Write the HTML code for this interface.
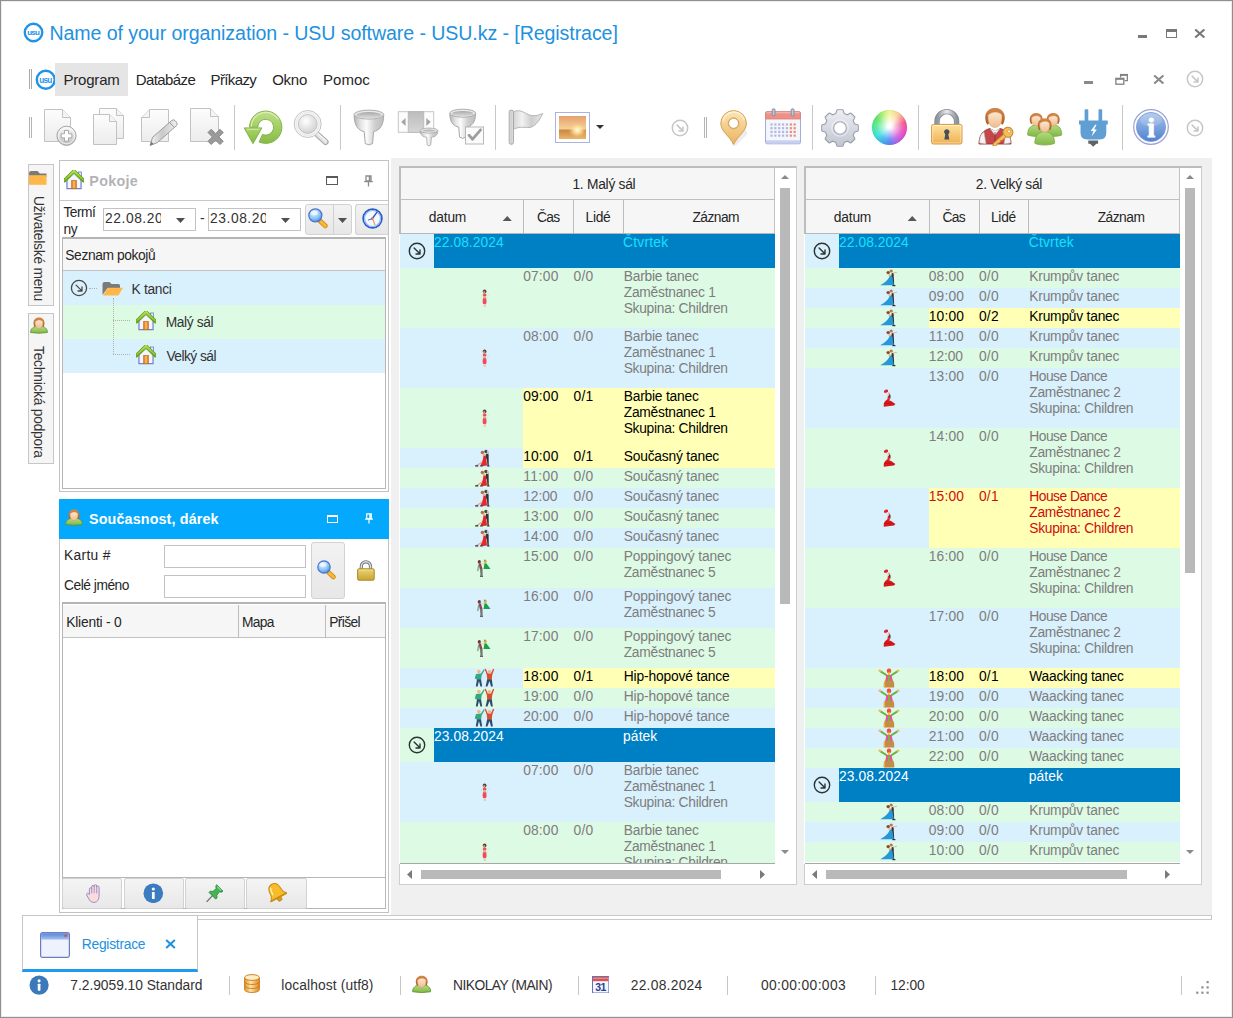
<!DOCTYPE html><html lang="cs"><head><meta charset="utf-8"><title>Registrace</title><style>
*{box-sizing:border-box;margin:0;padding:0}
html,body{width:1233px;height:1018px;overflow:hidden;background:#fff}
body{font-family:"Liberation Sans",sans-serif;font-size:13.8px;color:#2b2b2b;position:relative;line-height:16px}
.a{position:absolute}
.t{position:absolute;white-space:nowrap}
#win{position:absolute;left:0;top:0;width:1233px;height:1018px;border:1px solid #8f8f8f;box-shadow:inset 0 0 0 1px #ededed}
.ws{position:absolute;left:390.500px;top:157.500px;width:821.500px;height:758.300px;background:#f0f0f0}
.panel{position:absolute;background:#fff;border:1px solid #c2c2c2}
.hd{background:#f6f6f6}
.rb{background:#d9f0fd}
.rg{background:#ddfae5}
.ry{background:#ffffb5}
.grp{background:#0080c4}
.row{position:absolute;left:0;width:100%}
.c{position:absolute;top:0.9px;white-space:pre;color:#7d7d7d;line-height:16.3px}
.row.hl .c{color:#000}
.row.red .c{color:#d00c0c}
.vsep{position:absolute;width:1px;background:#bcbcbc}
.btn{position:absolute;border:1px solid #d2d2d2;border-radius:3px;background:linear-gradient(#f2f2f2,#e7e7e7)}
</style></head><body>
<div id="win"></div>
<svg width="0" height="0" style="position:absolute"><defs>
<linearGradient id="gpg" x1="0" y1="0" x2="0" y2="1"><stop offset="0" stop-color="#fdfdfd"/><stop offset="1" stop-color="#ececec"/></linearGradient>
<linearGradient id="ggr" x1="0" y1="0" x2="1" y2="0"><stop offset="0" stop-color="#f4f4f4"/><stop offset=".45" stop-color="#c9c9c9"/><stop offset="1" stop-color="#f0f0f0"/></linearGradient>
<linearGradient id="ggr2" x1="0" y1="0" x2="0" y2="1"><stop offset="0" stop-color="#fafafa"/><stop offset="1" stop-color="#bdbdbd"/></linearGradient>
<linearGradient id="ggreen" x1="0" y1="0" x2="0" y2="1"><stop offset="0" stop-color="#bfe088"/><stop offset="1" stop-color="#86bc44"/></linearGradient>
<linearGradient id="ggreen2" x1="0" y1="0" x2="0" y2="1"><stop offset="0" stop-color="#a9d468"/><stop offset="1" stop-color="#84ba42"/></linearGradient>
<linearGradient id="gfun" x1="0" y1="0" x2="1" y2="0"><stop offset="0" stop-color="#b4b4b4"/><stop offset=".22" stop-color="#e4e4e4"/><stop offset=".42" stop-color="#fbfbfb"/><stop offset=".7" stop-color="#cfcfcf"/><stop offset="1" stop-color="#bdbdbd"/></linearGradient>
<linearGradient id="gfunin" x1="0" y1="0" x2="0" y2="1"><stop offset="0" stop-color="#a8a8a8"/><stop offset="1" stop-color="#dedede"/></linearGradient>
<linearGradient id="gcol" x1="0" y1="0" x2="0" y2="1"><stop offset="0" stop-color="#bcbcbc"/><stop offset="1" stop-color="#d6d6d6"/></linearGradient>
<linearGradient id="gflag" x1="0" y1="0" x2="1" y2="0"><stop offset="0" stop-color="#d4d4d4"/><stop offset=".3" stop-color="#f2f2f2"/><stop offset=".62" stop-color="#cdcdcd"/><stop offset="1" stop-color="#e9e9e9"/></linearGradient>
<linearGradient id="gpin" x1="0" y1="0" x2="0" y2="1"><stop offset="0" stop-color="#fce6b8"/><stop offset="1" stop-color="#ebb25e"/></linearGradient>
<linearGradient id="glock" x1="0" y1="0" x2="0" y2="1"><stop offset="0" stop-color="#fde3a0"/><stop offset="1" stop-color="#efb052"/></linearGradient>
<linearGradient id="glock2" x1="0" y1="0" x2="0" y2="1"><stop offset="0" stop-color="#ecd470"/><stop offset="1" stop-color="#c8a434"/></linearGradient>
<linearGradient id="gshk" x1="0" y1="0" x2="1" y2="0"><stop offset="0" stop-color="#8e949c"/><stop offset=".5" stop-color="#e6e9ee"/><stop offset="1" stop-color="#8e949c"/></linearGradient>
<linearGradient id="ggear" x1="0" y1="0" x2="0" y2="1"><stop offset="0" stop-color="#eceef3"/><stop offset="1" stop-color="#c2c6d1"/></linearGradient>
<linearGradient id="ginfo" x1="0" y1="0" x2="0" y2="1"><stop offset="0" stop-color="#a8c4ec"/><stop offset="1" stop-color="#4f82d0"/></linearGradient>
<linearGradient id="gsun" x1="0" y1="0" x2="0" y2="1"><stop offset="0" stop-color="#e4a070"/><stop offset=".55" stop-color="#f6cf92"/><stop offset=".62" stop-color="#c98848"/><stop offset="1" stop-color="#eeb468"/></linearGradient>
<radialGradient id="gsun2" cx=".68" cy=".62" r=".35"><stop offset="0" stop-color="#fffbe6"/><stop offset=".4" stop-color="#ffe9a8" stop-opacity=".8"/><stop offset="1" stop-color="#f6c070" stop-opacity="0"/></radialGradient>
<radialGradient id="glens" cx=".4" cy=".35" r=".7"><stop offset="0" stop-color="#ffffff"/><stop offset="1" stop-color="#cfcfcf"/></radialGradient>
<radialGradient id="glensb" cx=".4" cy=".3" r=".75"><stop offset="0" stop-color="#e8f6ff"/><stop offset=".6" stop-color="#8cc4f8"/><stop offset="1" stop-color="#4a88e0"/></radialGradient>
<linearGradient id="gbody" x1="0" y1="0" x2="0" y2="1"><stop offset="0" stop-color="#b4dc7c"/><stop offset="1" stop-color="#7fb848"/></linearGradient>
<linearGradient id="ghair" x1="0" y1="0" x2="0" y2="1"><stop offset="0" stop-color="#d88848"/><stop offset="1" stop-color="#a85c28"/></linearGradient>
<linearGradient id="gface" x1="0" y1="0" x2="0" y2="1"><stop offset="0" stop-color="#fde6cc"/><stop offset="1" stop-color="#f0bc90"/></linearGradient>
<linearGradient id="gdb" x1="0" y1="0" x2="1" y2="0"><stop offset="0" stop-color="#e89028"/><stop offset=".4" stop-color="#fde4a8"/><stop offset="1" stop-color="#e08820"/></linearGradient>
<linearGradient id="gwin" x1="0" y1="0" x2="0" y2="1"><stop offset="0" stop-color="#5586d8"/><stop offset="1" stop-color="#9dbcf0"/></linearGradient>
<linearGradient id="groof" x1="0" y1="0" x2="0" y2="1"><stop offset="0" stop-color="#a8d848"/><stop offset="1" stop-color="#68a818"/></linearGradient>
<linearGradient id="gdoor" x1="0" y1="0" x2="1" y2="0"><stop offset="0" stop-color="#d87018"/><stop offset=".5" stop-color="#f8c468"/><stop offset="1" stop-color="#d87018"/></linearGradient>
</defs></svg>
<svg class="a" style="left:23px;top:22px" width="21" height="21" viewBox="0 0 24 24"><circle cx="12" cy="12" r="10" fill="#fff" stroke="#1f93ea" stroke-width="2.7"/><text x="11.6" y="15.1" font-size="9.2" font-weight="bold" text-anchor="middle" fill="#1f93ea" font-family="Liberation Sans,sans-serif" letter-spacing="-0.9">usu</text></svg>
<div class="t" style="left:49.500px;top:19.500px;font-size:19.600px;line-height:26px;color:#2191e0"><span style="letter-spacing:-0.087px">Name of your organization - USU software - USU.kz - [Registrace]</span></div>
<div class="a" style="left:1138px;top:35px;width:9px;height:2.5px;background:#787878"></div>
<div class="a" style="left:1165.5px;top:29px;width:11.5px;height:8.5px;border:1.3px solid #787878;border-top-width:3px"></div>
<svg class="a" style="left:1194px;top:29px" width="12" height="9" viewBox="0 0 12 9"><path d="M1.2 .4L10.4 8.600M10.400 .4L1.2 8.6" stroke="#787878" stroke-width="2"/></svg>
<div class="a" style="left:29px;top:69px;width:1px;height:20px;background:#a8a8a8"></div><div class="a" style="left:31px;top:69px;width:1px;height:20px;background:#a8a8a8"></div>
<svg class="a" style="left:34.5px;top:68.5px" width="21.5" height="21.5" viewBox="0 0 24 24"><circle cx="12" cy="12" r="10" fill="#fff" stroke="#1f93ea" stroke-width="2.7"/><text x="11.6" y="15.1" font-size="9.2" font-weight="bold" text-anchor="middle" fill="#1f93ea" font-family="Liberation Sans,sans-serif" letter-spacing="-0.9">usu</text></svg>
<div class="a" style="left:55px;top:63px;width:72.500px;height:33px;background:#e5e5e5"></div>
<div class="t" style="left:63.4px;top:69.500px;font-size:15px;line-height:20px;color:#262626"><span style="letter-spacing:-0.189px">Program</span></div>
<div class="t" style="left:135.7px;top:69.500px;font-size:15px;line-height:20px;color:#262626"><span style="letter-spacing:-0.577px">Databáze</span></div>
<div class="t" style="left:210.6px;top:69.500px;font-size:15px;line-height:20px;color:#262626"><span style="letter-spacing:-0.644px">Příkazy</span></div>
<div class="t" style="left:272.2px;top:69.500px;font-size:15px;line-height:20px;color:#262626"><span style="letter-spacing:-0.263px">Okno</span></div>
<div class="t" style="left:323px;top:69.500px;font-size:15px;line-height:20px;color:#262626"><span style="letter-spacing:0.043px">Pomoc</span></div>
<div class="a" style="left:1084.3px;top:81.2px;width:8.5px;height:2.6px;background:#8a8a8a"></div>
<svg class="a" style="left:1114px;top:73px" width="15" height="13" viewBox="0 0 15 13"><path d="M6.6 4.600V2.2H13.300V7.600H10.600" fill="none" stroke="#828282" stroke-width="1.3"/><path d="M6 1.800H14" stroke="#828282" stroke-width="1.8"/><rect x="1.9" y="6" width="7.9" height="5.2" fill="none" stroke="#828282" stroke-width="1.3"/><path d="M1.3 5.600H10.400" stroke="#828282" stroke-width="1.8"/></svg>
<svg class="a" style="left:1153px;top:75px" width="12" height="9" viewBox="0 0 12 9"><path d="M1.2 .4L10.4 8.600M10.400 .4L1.2 8.6" stroke="#8a8a8a" stroke-width="2"/></svg>
<svg class="a" style="left:1184.9px;top:69.4px" width="20" height="20" viewBox="-10 -10 20 20"><circle r="7.7" fill="none" stroke="#c6c6c6" stroke-width="1.5"/><path d="M-2.9-2.9L2.6 2.6M3-1V3H-1" fill="none" stroke="#c6c6c6" stroke-width="1.5" stroke-linecap="round" stroke-linejoin="round"/></svg>
<div class="a" style="left:29px;top:117px;width:1px;height:21px;background:#b4b4b4"></div><div class="a" style="left:31px;top:117px;width:1px;height:21px;background:#b4b4b4"></div>
<div class="vsep" style="left:234px;top:105px;height:45px;background:#c8c8c8"></div>
<div class="vsep" style="left:340px;top:105px;height:45px;background:#c8c8c8"></div>
<div class="vsep" style="left:495px;top:105px;height:45px;background:#c8c8c8"></div>
<div class="vsep" style="left:812px;top:105px;height:45px;background:#c8c8c8"></div>
<div class="vsep" style="left:918px;top:105px;height:45px;background:#c8c8c8"></div>
<div class="vsep" style="left:1122px;top:105px;height:45px;background:#c8c8c8"></div>
<svg class="a" style="left:40px;top:100px" width="48" height="50" viewBox="0 0 48 50"><path d="M4.5 9.5H22.5L30.5 17.5V41.5H4.5Z" fill="url(#gpg)" stroke="#c2c2c2" stroke-width="1"/><path d="M22.5 9.5V17.5H30.5" fill="#f4f4f4" stroke="#c2c2c2" stroke-width="1"/><circle cx="26.5" cy="35.8" r="9.6" fill="url(#ggr2)" stroke="#a6a6a6"/><circle cx="26.5" cy="35.8" r="8" fill="none" stroke="#fff" stroke-opacity=".7"/><path d="M24.5 30.5h4v3.3h3.3v4h-3.3v3.3h-4v-3.3h-3.3v-4h3.3z" fill="#fff" stroke="#9a9a9a" stroke-width=".8"/></svg>
<svg class="a" style="left:80px;top:100px" width="48" height="50" viewBox="0 0 48 50"><path d="M19.5 8.5H36.5L43.5 15.5V38.5H19.5Z" fill="url(#gpg)" stroke="#c2c2c2" stroke-width="1"/><path d="M36.5 8.5V15.5H43.5" fill="#f4f4f4" stroke="#c2c2c2" stroke-width="1"/><path d="M13.5 14.5H29.5L36.5 21.5V44.5H13.5Z" fill="url(#gpg)" stroke="#c2c2c2" stroke-width="1"/><path d="M29.5 14.5V21.5H36.5" fill="#f4f4f4" stroke="#c2c2c2" stroke-width="1"/></svg>
<svg class="a" style="left:136px;top:100px" width="48" height="50" viewBox="0 0 48 50"><path d="M13.5 9.5H32.5V41.5H5.5V17.5Z" fill="url(#gpg)" stroke="#c2c2c2" stroke-width="1"/><path d="M13.5 9.5V17.5H5.5" fill="#f4f4f4" stroke="#c2c2c2" stroke-width="1"/><path d="M14 45.5l2.6-8.2L35.6 20.6a2.6 2.6 0 0 1 3.7.2l1.2 1.4a2.6 2.6 0 0 1-.2 3.6L21.4 42.6z" fill="url(#ggr)" stroke="#9c9c9c" stroke-width="1"/><path d="M14 45.5l1.2-3.8 2.6 2.4z" fill="#777"/><path d="M33.6 22.4l4.8 5.2" stroke="#9c9c9c"/></svg>
<svg class="a" style="left:184px;top:100px" width="48" height="50" viewBox="0 0 48 50"><path d="M6.5 8.5H26.5L34.5 16.5V41.5H6.5Z" fill="url(#gpg)" stroke="#c2c2c2" stroke-width="1"/><path d="M26.5 8.5V16.5H34.5" fill="#f4f4f4" stroke="#c2c2c2" stroke-width="1"/><path d="M24 32.5l3.2-3.2 4.4 4.4 4.4-4.4 3.2 3.2-4.4 4.4 4.4 4.4-3.2 3.2-4.4-4.4-4.4 4.4-3.2-3.2 4.4-4.4z" fill="#9a9a9a" stroke="#858585" stroke-width="1" stroke-linejoin="round"/></svg>
<svg class="a" style="left:240px;top:100px" width="48" height="50" viewBox="0 0 48 50"><path d="M9.5 27.2A16.2 16.2 0 1 1 19.1 42L22.5 34.4A7.9 7.9 0 1 0 17.8 27.2Z" fill="url(#ggreen)" stroke="#7fb043" stroke-width=".9" stroke-linejoin="round"/><path d="M4.1 27.9H21.9L13 43.7Z" fill="url(#ggreen2)" stroke="#7fb043" stroke-width=".9" stroke-linejoin="round"/><path d="M11.2 26A14.6 14.6 0 0 1 38 19" fill="none" stroke="#e0f2bc" stroke-width="1.3" opacity=".85" stroke-linecap="round"/><path d="M6.6 29.3H19.6" stroke="#d4ecaa" stroke-width="1.1" opacity=".9"/></svg>
<svg class="a" style="left:290px;top:100px" width="48" height="50" viewBox="0 0 48 50"><path d="M26.4 33.6L35.6 42" stroke="#a9a9a9" stroke-width="6" stroke-linecap="round"/><path d="M26.4 33.6L35.6 42" stroke="#e2e2e2" stroke-width="3.8" stroke-linecap="round"/><path d="M27.4 33.2L36 41" stroke="#f8f8f8" stroke-width="1.2" stroke-linecap="round"/><circle cx="17.7" cy="24" r="13.5" fill="#fafafa" stroke="#c3c3c3" stroke-width="1"/><circle cx="17.7" cy="24" r="11.4" fill="none" stroke="#ebebeb" stroke-width="1.6"/><circle cx="17.7" cy="24" r="9.4" fill="url(#glens)" stroke="#bdbdbd" stroke-width=".9"/></svg>
<svg class="a" style="left:345px;top:100px" width="48" height="50" viewBox="0 0 48 50"><path d="M9.099999999999998 14.6C9.099999999999998 26.84 14.131999999999998 30.580000000000002 19.2 31.6L20.233999999999998 43.6Q23.9 46.0 27.566 43.6L28.599999999999998 31.6C33.668 30.580000000000002 38.7 26.84 38.7 14.6Z" fill="url(#gfun)" stroke="#a9a9a9" stroke-width="1"/><ellipse cx="23.9" cy="14.6" rx="14.8" ry="4.5" fill="#e9e9e9" stroke="#adadad" stroke-width="1"/><ellipse cx="23.9" cy="15.14" rx="12.600000000000001" ry="3.2" fill="url(#gfunin)"/></svg>
<svg class="a" style="left:395px;top:100px" width="48" height="50" viewBox="0 0 48 50"><rect x="3.3" y="11.7" width="35.4" height="20.6" fill="#fcfcfc" stroke="#c6c6c6"/><rect x="13.2" y="11.7" width="15.6" height="20.6" fill="url(#gcol)" stroke="#b6b6b6" stroke-width=".8"/><path d="M10.6 18v8L6.200 22zM31.3 18v8l4.4-4z" fill="#a4a4a4"/><path d="M25.2 30.6C25.2 35.424 28.192 36.897999999999996 31.7 37.3L32.206 44.8Q34 47.199999999999996 35.794 44.8L36.3 37.3C39.808 36.897999999999996 42.8 35.424 42.8 30.6Z" fill="url(#gfun)" stroke="#a9a9a9" stroke-width="0.9"/><ellipse cx="34" cy="30.6" rx="8.8" ry="2.5" fill="#e9e9e9" stroke="#adadad" stroke-width="0.9"/><ellipse cx="34" cy="30.900000000000002" rx="6.82" ry="1.3299999999999998" fill="url(#gfunin)"/></svg>
<svg class="a" style="left:445px;top:100px" width="48" height="50" viewBox="0 0 48 50"><path d="M4.799999999999999 13.2C4.799999999999999 23.136 9.185999999999998 26.172 13.7 27L14.579999999999998 37.2Q17.7 39.6 20.82 37.2L21.7 27C26.214 26.172 30.6 23.136 30.6 13.2Z" fill="url(#gfun)" stroke="#a9a9a9" stroke-width="1"/><ellipse cx="17.7" cy="13.2" rx="12.9" ry="4" fill="#e9e9e9" stroke="#adadad" stroke-width="1"/><ellipse cx="17.7" cy="13.68" rx="10.7" ry="2.7" fill="url(#gfunin)"/><rect x="20.5" y="27" width="18" height="17" fill="#fbfbfb" stroke="#b8b8b8"/><path d="M24 35.2l3.6 4 8-9.4" fill="none" stroke="#9e9e9e" stroke-width="2.8" stroke-linecap="round" stroke-linejoin="round"/></svg>
<svg class="a" style="left:500px;top:100px" width="48" height="50" viewBox="0 0 48 50"><path d="M13.400 11.800C19 9 23.500 12.200 28 14.400 32.400 16.400 37.500 16 42.600 13.400 39.500 20.600 34.600 28 27.600 27.600 22.400 27.200 18.800 26.600 13.400 29.400Z" fill="url(#gflag)" stroke="#b4b4b4" stroke-width="1"/><rect x="9.200" y="10.200" width="4.200" height="34" rx="1.600" fill="url(#ggr)" stroke="#a4a4a4" stroke-width="1"/></svg>
<svg class="a" style="left:555px;top:112px" width="35" height="31" viewBox="0 0 35 31"><rect x=".5" y=".5" width="34" height="30" fill="#fff" stroke="#a9b2e0"/><rect x="4" y="4" width="27" height="23" fill="url(#gsun)"/><rect x="4" y="4" width="27" height="23" fill="url(#gsun2)"/></svg>
<svg class="a" style="left:720px;top:100px" width="40" height="50" viewBox="0 0 40 50"><path d="M14.5 43.5L25 33" stroke="#000" stroke-opacity=".07" stroke-width="5" stroke-linecap="round"/><path d="M13.6 44.2C9.600 35.8 .8 31.2.8 23.2A12.8 12.8 0 0 1 26.4 23.2C26.4 31.2 17.6 35.8 13.6 44.2ZM13.6 18.100a5 5 0 1 0 .01 0Z" fill="url(#gpin)" stroke="#d6a050" stroke-width="1" fill-rule="evenodd" transform="translate(0,.2)"/><path d="M3 21.6A10.800 10.800 0 0 1 24.2 19.800" fill="none" stroke="#fff" stroke-opacity=".5" stroke-width="1.4" transform="translate(0,.2)"/><circle cx="13.6" cy="23.300" r="5.600" fill="none" stroke="#c89040" stroke-opacity=".45" stroke-width=".8"/></svg>
<svg class="a" style="left:765px;top:100px" width="37" height="46" viewBox="0 0 37 46"><rect x=".5" y="11.800" width="35" height="32" rx="1.5" fill="#f4f6fc" stroke="#a4acdc"/><path d="M.5 13.200a1.500 1.500 0 0 1 1.500-1.500h32a1.500 1.500 0 0 1 1.500 1.500v5.800h-35z" fill="#ec9088" stroke="#dc8078" stroke-width=".8"/><path d="M1.5 12.800H34.500" stroke="#f8c0b8" stroke-width="1"/><rect x="1" y="40.300" width="34" height="3" fill="#c8d0f0"/><rect x="7.199999999999999" y="8.800" width="2.800" height="7" rx="1" fill="#c0c8d8" stroke="#7c88a4" stroke-width=".9"/><rect x="26.200000000000003" y="8.800" width="2.800" height="7" rx="1" fill="#c0c8d8" stroke="#7c88a4" stroke-width=".9"/><rect x="5.40" y="23.40" width="2.200" height="2.200" fill="#b0b6e0"/><rect x="9.26" y="23.40" width="2.200" height="2.200" fill="#b0b6e0"/><rect x="13.12" y="23.40" width="2.200" height="2.200" fill="#b0b6e0"/><rect x="16.98" y="23.40" width="2.200" height="2.200" fill="#b0b6e0"/><rect x="20.84" y="23.40" width="2.200" height="2.200" fill="#b0b6e0"/><rect x="24.70" y="23.40" width="2.200" height="2.200" fill="#f08c70"/><rect x="28.56" y="23.40" width="2.200" height="2.200" fill="#f08c70"/><rect x="5.40" y="27.10" width="2.200" height="2.200" fill="#b0b6e0"/><rect x="9.26" y="27.10" width="2.200" height="2.200" fill="#b0b6e0"/><rect x="13.12" y="27.10" width="2.200" height="2.200" fill="#b0b6e0"/><rect x="16.98" y="27.10" width="2.200" height="2.200" fill="#b0b6e0"/><rect x="20.84" y="27.10" width="2.200" height="2.200" fill="#b0b6e0"/><rect x="24.70" y="27.10" width="2.200" height="2.200" fill="#f08c70"/><rect x="28.56" y="27.10" width="2.200" height="2.200" fill="#f08c70"/><rect x="5.40" y="30.80" width="2.200" height="2.200" fill="#b0b6e0"/><rect x="9.26" y="30.80" width="2.200" height="2.200" fill="#b0b6e0"/><rect x="13.12" y="30.80" width="2.200" height="2.200" fill="#b0b6e0"/><rect x="16.98" y="30.80" width="2.200" height="2.200" fill="#b0b6e0"/><rect x="20.84" y="30.80" width="2.200" height="2.200" fill="#b0b6e0"/><rect x="24.70" y="30.80" width="2.200" height="2.200" fill="#f08c70"/><rect x="28.56" y="30.80" width="2.200" height="2.200" fill="#f08c70"/><rect x="5.40" y="34.50" width="2.200" height="2.200" fill="#b0b6e0"/><rect x="9.26" y="34.50" width="2.200" height="2.200" fill="#b0b6e0"/><rect x="13.12" y="34.50" width="2.200" height="2.200" fill="#b0b6e0"/><rect x="16.98" y="34.50" width="2.200" height="2.200" fill="#b0b6e0"/><rect x="20.84" y="34.50" width="2.200" height="2.200" fill="#b0b6e0"/><rect x="24.70" y="34.50" width="2.200" height="2.200" fill="#f08c70"/><rect x="28.56" y="34.50" width="2.200" height="2.200" fill="#f08c70"/></svg>
<svg class="a" style="left:820.3px;top:107.7px" width="40" height="40" viewBox="0 0 40 40"><path d="M17.67 2.66 L22.33 2.66 L23.31 6.19 L27.42 7.89 L30.62 6.09 L33.91 9.38 L32.11 12.58 L33.81 16.69 L37.34 17.67 L37.34 22.33 L33.81 23.31 L32.11 27.42 L33.91 30.62 L30.62 33.91 L27.42 32.11 L23.31 33.81 L22.33 37.34 L17.67 37.34 L16.69 33.81 L12.58 32.11 L9.38 33.91 L6.09 30.62 L7.89 27.42 L6.19 23.31 L2.66 22.33 L2.66 17.67 L6.19 16.69 L7.89 12.58 L6.09 9.38 L9.38 6.09 L12.58 7.89 L16.69 6.19Z" fill="#959ba8" stroke="#959ba8" stroke-width="3" stroke-linejoin="round"/><path d="M17.67 2.66 L22.33 2.66 L23.31 6.19 L27.42 7.89 L30.62 6.09 L33.91 9.38 L32.11 12.58 L33.81 16.69 L37.34 17.67 L37.34 22.33 L33.81 23.31 L32.11 27.42 L33.91 30.62 L30.62 33.91 L27.42 32.11 L23.31 33.81 L22.33 37.34 L17.67 37.34 L16.69 33.81 L12.58 32.11 L9.38 33.91 L6.09 30.62 L7.89 27.42 L6.19 23.31 L2.66 22.33 L2.66 17.67 L6.19 16.69 L7.89 12.58 L6.09 9.38 L9.38 6.09 L12.58 7.89 L16.69 6.19Z" fill="url(#ggear)" stroke="url(#ggear)" stroke-width="1" stroke-linejoin="round"/><circle cx="20" cy="20" r="6.300" fill="#fff" stroke="#a2a8b4" stroke-width="1.100"/><circle cx="20" cy="20" r="8.200" fill="none" stroke="#fff" stroke-opacity=".45" stroke-width="1.200"/></svg>
<div class="a" style="left:871.700px;top:109.600px;width:35px;height:35px;border-radius:50%;background:radial-gradient(circle at 50% 46%,#fff 0,#fff 7%,rgba(255,255,255,.6) 26%,rgba(255,255,255,.15) 50%,rgba(255,255,255,0) 66%),conic-gradient(from 0deg,#f4f48c,#f8cc90 9%,#f2508c 20%,#ea48bc 30%,#b85ce8 42%,#5686f0 50%,#38b4f0 58%,#38e0d8 66%,#40e89c 75%,#58e05c 85%,#b4f070 94%,#f4f48c);box-shadow:inset 0 0 1.500px rgba(0,0,0,.18)"></div>
<svg class="a" style="left:931px;top:108.4px" width="32" height="37" viewBox="0 0 32 37"><path d="M6 18V13.400A9.8 9.8 0 0 1 25.6 13.400V18" fill="none" stroke="#858b94" stroke-width="5.4"/><path d="M6 18V13.400A9.8 9.8 0 0 1 25.6 13.400V18" fill="none" stroke="url(#gshk)" stroke-width="3.6"/><rect x=".6" y="16.4" width="30.4" height="19.6" rx="1.8" fill="url(#glock)" stroke="#d9983c" stroke-width="1"/><rect x="1.7" y="17.5" width="28.2" height="17.4" rx="1" fill="none" stroke="#fff" stroke-opacity=".45"/><path d="M15.8 21.200a2.7 2.7 0 0 1 1.5 4.950l1 5.350h-5l1-5.350a2.7 2.7 0 0 1 1.500-4.950z" fill="#474e58"/></svg>
<svg class="a" style="left:978px;top:107.6px" width="40" height="38" viewBox="0 0 40 38"><path d="M1 36C1 26 6 22 12 20.500L17 24 22 20.500C28 22 33 26 33 36Z" fill="#c6474a" stroke="#943034" stroke-width=".9"/><path d="M1.5 35C1.5 29 3 26 6 24L8 36Z" fill="#f4f4f4" stroke="#b0b0b0" stroke-width=".6"/><path d="M32.5 35C32.5 29 31 26 28 24L26 36Z" fill="#f4f4f4" stroke="#b0b0b0" stroke-width=".6"/><path d="M12 20.500L17 27 22 20.5 17 23Z" fill="#fafafa" stroke="#b8b8b8" stroke-width=".6"/><path d="M17 24V36" stroke="#8a2c30" stroke-width=".8"/><path d="M7.4 11.76C5.0 -4.08 29.0 -4.08 26.6 11.76C25.64 17.04 23.72 18.0 22.759999999999998 14.16L11.24 14.16C10.280000000000001 18.0 8.36 17.04 7.4 11.76Z" fill="url(#ghair)"/><path d="M10.088000000000001 6.960000000000001C14.120000000000001 3.6000000000000005 19.88 2.6400000000000006 23.912 6.960000000000001C24.68 17.04 19.88 19.439999999999998 17 19.439999999999998C14.120000000000001 19.439999999999998 9.32 17.04 10.088000000000001 6.960000000000001Z" fill="url(#gface)" stroke="#d09868" stroke-width=".5"/><g transform="rotate(-42 27 27)"><circle cx="31" cy="27" r="5" fill="#f4bc5c" stroke="#c88828" stroke-width="1"/><circle cx="32.4" cy="27" r="1.5" fill="#fff" stroke="#c88828" stroke-width=".6"/><path d="M26.5 25.500H12.500L10.5 27.3 12.5 29H15L16 28 17 29H19L20 28 21 29H26.500Z" fill="#f4bc5c" stroke="#c88828" stroke-width=".9"/></g></svg>
<svg class="a" style="left:1024.5px;top:106.6px" width="40" height="40" viewBox="0 0 40 40"><path d="M2.619999999999999 27.979999999999997C2.619999999999999 20.18 7.299999999999999 17.84 11.2 17.84C15.1 17.84 19.78 20.18 19.78 27.979999999999997C15.879999999999999 29.93 6.52 29.93 2.619999999999999 27.979999999999997Z" fill="url(#gbody)" stroke="#7aa84a" stroke-width=".8"/><path d="M4.799999999999999 13.84C3.1999999999999993 3.2799999999999994 19.2 3.2799999999999994 17.6 13.84C16.96 17.36 15.68 18.0 15.04 15.44L7.359999999999999 15.44C6.72 18.0 5.439999999999999 17.36 4.799999999999999 13.84Z" fill="url(#ghair)"/><path d="M6.592 10.64C9.28 8.399999999999999 13.12 7.76 15.808 10.64C16.32 17.36 13.12 18.96 11.2 18.96C9.28 18.96 6.079999999999998 17.36 6.592 10.64Z" fill="url(#gface)" stroke="#d09868" stroke-width=".5"/><path d="M19.619999999999997 27.979999999999997C19.619999999999997 20.18 24.299999999999997 17.84 28.2 17.84C32.1 17.84 36.78 20.18 36.78 27.979999999999997C32.879999999999995 29.93 23.52 29.93 19.619999999999997 27.979999999999997Z" fill="url(#gbody)" stroke="#7aa84a" stroke-width=".8"/><path d="M21.799999999999997 13.84C20.2 3.2799999999999994 36.2 3.2799999999999994 34.6 13.84C33.96 17.36 32.68 18.0 32.04 15.44L24.36 15.44C23.72 18.0 22.439999999999998 17.36 21.799999999999997 13.84Z" fill="url(#ghair)"/><path d="M23.592 10.64C26.28 8.399999999999999 30.119999999999997 7.76 32.808 10.64C33.32 17.36 30.119999999999997 18.96 28.2 18.96C26.28 18.96 23.08 17.36 23.592 10.64Z" fill="url(#gface)" stroke="#d09868" stroke-width=".5"/><path d="M9.799999999999999 36.3C9.799999999999999 27.299999999999997 15.2 24.599999999999998 19.7 24.599999999999998C24.2 24.599999999999998 29.6 27.299999999999997 29.6 36.3C25.1 38.55 14.299999999999999 38.55 9.799999999999999 36.3Z" fill="url(#gbody)" stroke="#7aa84a" stroke-width=".8"/><path d="M12.899999999999999 19.779999999999998C11.2 8.559999999999999 28.2 8.559999999999999 26.5 19.779999999999998C25.82 23.52 24.46 24.2 23.78 21.479999999999997L15.62 21.479999999999997C14.94 24.2 13.579999999999998 23.52 12.899999999999999 19.779999999999998Z" fill="url(#ghair)"/><path d="M14.803999999999998 16.38C17.66 13.999999999999998 21.74 13.319999999999999 24.596 16.38C25.14 23.52 21.74 25.22 19.7 25.22C17.66 25.22 14.259999999999998 23.52 14.803999999999998 16.38Z" fill="url(#gface)" stroke="#d09868" stroke-width=".5"/></svg>
<svg class="a" style="left:1078.5px;top:107.6px" width="29" height="39" viewBox="0 0 29 39"><rect x="5.600" y="1.200" width="3.700" height="13" rx=".9" fill="#5f9fd3"/><rect x="19.500" y="1.200" width="3.700" height="13" rx=".9" fill="#5f9fd3"/><path d="M0 12.400H28.800V16.600H27.300V24.800Q27.300 31.400 20.700 31.400H8.100Q1.500 31.400 1.500 24.800V16.600H0Z" fill="#5f9fd3"/><path d="M16.200 16.800L11.700 23H14.400L12.600 28.600 17.900 21.600H15.100L17.600 16.800Z" fill="#fff"/><path d="M9.300 32.600H19.100V35.700H17.300L14.200 38.800 11.100 35.700H9.300Z" fill="#5e636a"/></svg>
<svg class="a" style="left:1132.5px;top:109.3px" width="36" height="36" viewBox="0 0 36 36"><circle cx="18" cy="18" r="17.3" fill="#fff" stroke="#9aa2d8" stroke-width="1.2"/><circle cx="18" cy="18" r="14.6" fill="url(#ginfo)" stroke="#7c98d4" stroke-width=".8"/><ellipse cx="18" cy="11" rx="11" ry="6.5" fill="#fff" opacity=".16"/><text x="18.2" y="27.6" font-family="Liberation Serif,serif" font-weight="bold" font-size="28" text-anchor="middle" fill="#fff" stroke="#fff" stroke-width=".9">i</text></svg>
<svg class="a" style="left:596px;top:125px" width="8" height="4"><path d="M0 0H8L4 4Z" fill="#333"/></svg>
<svg class="a" style="left:669.6px;top:118px" width="20" height="20" viewBox="-10 -10 20 20"><circle r="7.7" fill="none" stroke="#c6c6c6" stroke-width="1.5"/><path d="M-2.9-2.9L2.6 2.6M3-1V3H-1" fill="none" stroke="#c6c6c6" stroke-width="1.5" stroke-linecap="round" stroke-linejoin="round"/></svg>
<div class="a" style="left:704px;top:117px;width:1px;height:21px;background:#b4b4b4"></div><div class="a" style="left:706px;top:117px;width:1px;height:21px;background:#b4b4b4"></div>
<svg class="a" style="left:1184.9px;top:117.8px" width="20" height="20" viewBox="-10 -10 20 20"><circle r="7.7" fill="none" stroke="#c6c6c6" stroke-width="1.5"/><path d="M-2.9-2.9L2.6 2.6M3-1V3H-1" fill="none" stroke="#c6c6c6" stroke-width="1.5" stroke-linecap="round" stroke-linejoin="round"/></svg>
<div class="ws"></div>
<div class="a" style="left:28px;top:164px;width:26px;height:142px;background:#f5f5f5;border:1px solid #c6c6c6"></div>
<div class="a" style="left:28px;top:313px;width:26px;height:151px;background:#f5f5f5;border:1px solid #c6c6c6"></div>
<div class="t" style="left:46.400px;top:196.4px;transform-origin:0 0;transform:rotate(90deg);line-height:16px;color:#333"><span style="letter-spacing:-0.245px">Uživatelské menu</span></div>
<div class="t" style="left:46.400px;top:346px;transform-origin:0 0;transform:rotate(90deg);line-height:16px;color:#333"><span style="letter-spacing:-0.238px">Technická podpora</span></div>
<svg class="a" style="left:28.6px;top:170.2px" width="18" height="15" viewBox="0 0 18 15"><path d="M0 3.2Q0 1 2.2 1H8.6L10.8 3.4H17.5V7H0Z" fill="#7a7a7a"/><rect x="0" y="5.2" width="17.5" height="9.6" fill="#ffb74a"/></svg>
<svg class="a" style="left:29.9px;top:317.2px" width="18.0" height="17.0" viewBox="0 0 18 17"><path d="M.6 15.500C.6 11 4 9.8 6 9.400L9 10.6 12 9.400C14 9.8 17.4 11 17.4 15.500Q9 17 .6 15.500Z" fill="url(#gbody)" stroke="#5c9030" stroke-width=".8"/><path d="M3.5999999999999996 7.29C2.25 -1.62 15.75 -1.62 14.4 7.29C13.86 10.260000000000002 12.78 10.8 12.24 8.64L5.76 8.64C5.220000000000001 10.8 4.14 10.260000000000002 3.5999999999999996 7.29Z" fill="url(#ghair)"/><path d="M5.112 4.59C7.38 2.7 10.620000000000001 2.16 12.888 4.59C13.32 10.260000000000002 10.620000000000001 11.61 9 11.61C7.38 11.61 4.68 10.260000000000002 5.112 4.59Z" fill="url(#gface)" stroke="#d09868" stroke-width=".5"/></svg>
<div class="panel" style="left:59px;top:160px;width:329.500px;height:332px"></div>
<div class="a" style="left:60px;top:200px;width:328px;height:1px;background:#c8c8c8"></div>
<svg preserveAspectRatio="none" class="a" style="left:63.5px;top:169.5px" width="20" height="20" viewBox="0 0 21 20"><rect x="15.2" y="2" width="3.2" height="7" fill="#e8ecfa" stroke="#7a86cc" stroke-width=".9"/><path d="M3.1 9.6L10.5 3 17.9 9.6V18.6H3.1Z" fill="#f4f6fe" stroke="#7482cc" stroke-width="1.3"/><rect x="8.1" y="10.6" width="4.8" height="8.1" fill="url(#gdoor)" stroke="#c46410" stroke-width=".7"/><path d="M.7 10.400L10.5 1.2 20.3 10.4" fill="none" stroke="#5c9a14" stroke-width="3.8" stroke-linejoin="miter" stroke-linecap="round"/><path d="M.7 10.400L10.5 1.2 20.3 10.4" fill="none" stroke="url(#groof)" stroke-width="2.6" stroke-linejoin="miter" stroke-linecap="round"/><path d="M1 9.600L10.5 .8 20 9.6" fill="none" stroke="#b8e060" stroke-width=".8" stroke-linecap="round"/></svg>
<div class="t" style="left:89.300px;top:171px;font-size:14.300px;line-height:20px;font-weight:bold;color:#b3b3b6"><span style="letter-spacing:0.302px">Pokoje</span></div>
<div class="a" style="left:326px;top:176px;width:11.500px;height:9px;border:1px solid #5a5a5a;border-top-width:2px"></div>
<svg class="a" style="left:363px;top:175px" width="11" height="12" viewBox="0 0 11 12"><path d="M3 1H8V6H3ZM1.2 6.600H9.800M5.5 6.600V11.5" fill="none" stroke="#8c8c8c" stroke-width="1.3"/><path d="M6.6 1V6" stroke="#8c8c8c" stroke-width="1.7"/></svg>
<div class="t" style="left:63.500px;top:204px;line-height:17px;color:#262626"><span style="letter-spacing:-0.56px">Termí</span><br><span style="letter-spacing:-0.538px">ny</span></div>
<div class="a" style="left:102.5px;top:207.500px;width:93.500px;height:23.500px;background:#fff;border:1px solid #c3c3c3"></div>
<div class="t" style="left:105.1px;top:211px;color:#333;width:55.500px;overflow:hidden"><span style="letter-spacing:0.55px">22.08.20:</span></div>
<svg class="a" style="left:176.0px;top:217.500px" width="9" height="5"><path d="M0 0H9L4.5 5Z" fill="#505050"/></svg>
<div class="a" style="left:207.5px;top:207.500px;width:93.500px;height:23.500px;background:#fff;border:1px solid #c3c3c3"></div>
<div class="t" style="left:210.1px;top:211px;color:#333;width:55.500px;overflow:hidden"><span style="letter-spacing:0.55px">23.08.20:</span></div>
<svg class="a" style="left:281.0px;top:217.500px" width="9" height="5"><path d="M0 0H9L4.5 5Z" fill="#505050"/></svg>
<div class="t" style="left:200px;top:210.500px;color:#333">-</div>
<div class="btn" style="left:304.500px;top:204px;width:47.500px;height:30.500px"></div>
<div class="a" style="left:333px;top:205px;width:1px;height:28.500px;background:#d0d0d0"></div>
<svg class="a" style="left:338px;top:217.500px" width="9" height="5"><path d="M0 0H9L4.5 5Z" fill="#505050"/></svg>
<div class="btn" style="left:355px;top:204px;width:33px;height:30.500px;border-right:none;border-radius:3px 0 0 3px"></div>
<svg class="a" style="left:307.5px;top:208.2px" width="21.0" height="21.0" viewBox="0 0 20 20"><path d="M10.8 11.600L16.4 17" stroke="#d08a10" stroke-width="4.6" stroke-linecap="round"/><path d="M10.8 11.600L16.4 17" stroke="#f8b838" stroke-width="3" stroke-linecap="round"/><path d="M9.4 10.200L11.6 12.4" stroke="#8890a8" stroke-width="2.6"/><circle cx="7" cy="7" r="6.2" fill="url(#glensb)" stroke="#4c74cc" stroke-width="1.2"/><ellipse cx="6" cy="4.8" rx="3.6" ry="2.2" fill="#fff" opacity=".55"/></svg>
<svg class="a" style="left:362.3px;top:208.2px" width="21" height="21" viewBox="0 0 21 21"><circle cx="10.5" cy="10.5" r="9.4" fill="#f4f9ff" stroke="#2c5cc4" stroke-width="1.7"/><circle cx="10.5" cy="10.5" r="8" fill="none" stroke="#8cb8f4" stroke-width="1.2"/><path d="M10 11L15 4.2" stroke="#3058c0" stroke-width="1.4" stroke-linecap="round"/><path d="M10.2 10.800L6.4 12" stroke="#5070d0" stroke-width="1.2" stroke-linecap="round"/><path d="M10.2 9.500L13 17" stroke="#f09060" stroke-width="1.1" stroke-linecap="round"/><circle cx="10.2" cy="10.4" r="1.1" fill="#e86850"/></svg>
<div class="a" style="left:61.500px;top:236.500px;width:324.500px;height:252.500px;background:#fff;border:1px solid #b6b6b6;border-top:2.500px solid #b4b4b4;border-left-width:1.500px"></div>
<div class="a hd" style="left:63px;top:239px;width:322px;height:32px;border-bottom:1px solid #c2c2c2"></div>
<div class="t" style="left:65.300px;top:247.500px;color:#262626"><span style="letter-spacing:-0.394px">Seznam pokojů</span></div>
<div class="a rb" style="left:63px;top:271px;width:322px;height:34px"></div>
<div class="a rg" style="left:63px;top:305px;width:322px;height:33.500px"></div>
<div class="a rb" style="left:63px;top:338.500px;width:322px;height:34px"></div>
<svg class="a" style="left:69px;top:278px" width="20" height="20" viewBox="-10 -10 20 20"><circle r="7.6" fill="none" stroke="#484848" stroke-width="1.3"/><path d="M-2.9-2.9L2.6 2.6M3-1V3H-1" fill="none" stroke="#484848" stroke-width="1.3" stroke-linecap="round" stroke-linejoin="round"/></svg>
<div class="a" style="left:89px;top:288px;width:8px;border-top:1px dotted #b0b0b0"></div>
<div class="a" style="left:113px;top:298px;height:56px;border-left:1px dotted #b0b0b0"></div>
<div class="a" style="left:113px;top:320px;width:17px;border-top:1px dotted #b0b0b0"></div>
<div class="a" style="left:113px;top:354px;width:17px;border-top:1px dotted #b0b0b0"></div>
<svg class="a" style="left:102px;top:281px" width="22" height="15" viewBox="0 0 22 15"><path d="M.5 3.200Q.5 1 2.5 1H7.500L9.5 3H16.500Q18 3 18 4.500V7H5.500L.5 14Z" fill="#7a7a7a"/><path d="M1 14.500L5.8 6.800H21L16.4 14.500Z" fill="#ffb74a"/></svg>
<svg preserveAspectRatio="none" class="a" style="left:136px;top:310.5px" width="20" height="20" viewBox="0 0 21 20"><rect x="15.2" y="2" width="3.2" height="7" fill="#e8ecfa" stroke="#7a86cc" stroke-width=".9"/><path d="M3.1 9.6L10.5 3 17.9 9.6V18.6H3.1Z" fill="#f4f6fe" stroke="#7482cc" stroke-width="1.3"/><rect x="8.1" y="10.6" width="4.8" height="8.1" fill="url(#gdoor)" stroke="#c46410" stroke-width=".7"/><path d="M.7 10.400L10.5 1.2 20.3 10.4" fill="none" stroke="#5c9a14" stroke-width="3.8" stroke-linejoin="miter" stroke-linecap="round"/><path d="M.7 10.400L10.5 1.2 20.3 10.4" fill="none" stroke="url(#groof)" stroke-width="2.6" stroke-linejoin="miter" stroke-linecap="round"/><path d="M1 9.600L10.5 .8 20 9.6" fill="none" stroke="#b8e060" stroke-width=".8" stroke-linecap="round"/></svg>
<svg preserveAspectRatio="none" class="a" style="left:136px;top:344.8px" width="20" height="20" viewBox="0 0 21 20"><rect x="15.2" y="2" width="3.2" height="7" fill="#e8ecfa" stroke="#7a86cc" stroke-width=".9"/><path d="M3.1 9.6L10.5 3 17.9 9.6V18.6H3.1Z" fill="#f4f6fe" stroke="#7482cc" stroke-width="1.3"/><rect x="8.1" y="10.6" width="4.8" height="8.1" fill="url(#gdoor)" stroke="#c46410" stroke-width=".7"/><path d="M.7 10.400L10.5 1.2 20.3 10.4" fill="none" stroke="#5c9a14" stroke-width="3.8" stroke-linejoin="miter" stroke-linecap="round"/><path d="M.7 10.400L10.5 1.2 20.3 10.4" fill="none" stroke="url(#groof)" stroke-width="2.6" stroke-linejoin="miter" stroke-linecap="round"/><path d="M1 9.600L10.5 .8 20 9.6" fill="none" stroke="#b8e060" stroke-width=".8" stroke-linecap="round"/></svg>
<div class="t" style="left:131.500px;top:281.500px;color:#333"><span style="letter-spacing:-0.313px">K tanci</span></div>
<div class="t" style="left:165.700px;top:314.500px;color:#333"><span style="letter-spacing:-0.402px">Malý sál</span></div>
<div class="t" style="left:166.400px;top:348.500px;color:#333"><span style="letter-spacing:-0.54px">Velký sál</span></div>
<div class="panel" style="left:59px;top:499px;width:329.500px;height:413.500px"></div>
<div class="a" style="left:59px;top:499px;width:329.500px;height:40px;background:#04a9fd"></div>
<svg class="a" style="left:64.6px;top:508.8px" width="18.0" height="17.0" viewBox="0 0 18 17"><path d="M.6 15.500C.6 11 4 9.8 6 9.400L9 10.6 12 9.400C14 9.8 17.4 11 17.4 15.500Q9 17 .6 15.500Z" fill="url(#gbody)" stroke="#5c9030" stroke-width=".8"/><path d="M3.5999999999999996 7.29C2.25 -1.62 15.75 -1.62 14.4 7.29C13.86 10.260000000000002 12.78 10.8 12.24 8.64L5.76 8.64C5.220000000000001 10.8 4.14 10.260000000000002 3.5999999999999996 7.29Z" fill="url(#ghair)"/><path d="M5.112 4.59C7.38 2.7 10.620000000000001 2.16 12.888 4.59C13.32 10.260000000000002 10.620000000000001 11.61 9 11.61C7.38 11.61 4.68 10.260000000000002 5.112 4.59Z" fill="url(#gface)" stroke="#d09868" stroke-width=".5"/></svg>
<div class="t" style="left:89px;top:509px;font-size:14.300px;line-height:20px;font-weight:bold;color:#fff"><span style="letter-spacing:0.149px">Současnost, dárek</span></div>
<div class="a" style="left:326.500px;top:515px;width:11px;height:8px;border:1px solid #fff;border-top-width:2px"></div>
<svg class="a" style="left:363.500px;top:513px" width="10" height="11" viewBox="0 0 11 12"><path d="M3 1H8V6H3ZM1.2 6.600H9.800M5.5 6.600V11.5" fill="none" stroke="#fff" stroke-width="1.3"/><path d="M6.6 1V6" stroke="#fff" stroke-width="1.7"/></svg>
<div class="t" style="left:64px;top:547.500px;color:#262626"><span style="letter-spacing:0.329px">Kartu #</span></div>
<div class="t" style="left:64px;top:577.800px;color:#262626"><span style="letter-spacing:-0.48px">Celé jméno</span></div>
<div class="a" style="left:164px;top:544.500px;width:142px;height:23px;background:#fff;border:1px solid #c3c3c3"></div>
<div class="a" style="left:164px;top:574.500px;width:142px;height:23px;background:#fff;border:1px solid #c3c3c3"></div>
<div class="btn" style="left:310.500px;top:542px;width:34.500px;height:56.500px"></div>
<svg class="a" style="left:317px;top:560px" width="20.0" height="20.0" viewBox="0 0 20 20"><path d="M10.8 11.600L16.4 17" stroke="#d08a10" stroke-width="4.6" stroke-linecap="round"/><path d="M10.8 11.600L16.4 17" stroke="#f8b838" stroke-width="3" stroke-linecap="round"/><path d="M9.4 10.200L11.6 12.4" stroke="#8890a8" stroke-width="2.6"/><circle cx="7" cy="7" r="6.2" fill="url(#glensb)" stroke="#4c74cc" stroke-width="1.2"/><ellipse cx="6" cy="4.8" rx="3.6" ry="2.2" fill="#fff" opacity=".55"/></svg>
<svg class="a" style="left:357.3px;top:559.6px" width="18" height="21" viewBox="0 0 18 21"><path d="M4.300 9.600V6.400A4.600 4.600 0 0 1 13.500 6.400V9.600" fill="none" stroke="#70747c" stroke-width="3.200"/><path d="M4.300 9.600V6.400A4.600 4.600 0 0 1 13.500 6.400V9.600" fill="none" stroke="#dcdfe4" stroke-width="1.400"/><rect x=".6" y="8.800" width="16.600" height="11.400" rx="1.300" fill="url(#glock2)" stroke="#a88a28" stroke-width="1"/><path d="M1.800 10.200H16" stroke="#f4e49c" stroke-width=".9" opacity=".8"/></svg>
<div class="a" style="left:61.500px;top:602px;width:324.500px;height:307px;background:#fff;border:1px solid #b6b6b6;border-top:2.500px solid #b4b4b4;border-left-width:1.500px"></div>
<div class="a" style="left:63px;top:877px;width:322px;height:1px;background:#b6b6b6"></div>
<div class="a hd" style="left:63px;top:604.500px;width:322px;height:33px;border-bottom:1px solid #c2c2c2"></div>
<div class="vsep" style="left:238px;top:604.500px;height:33px"></div><div class="vsep" style="left:325px;top:604.500px;height:33px"></div>
<div class="t" style="left:66.200px;top:614.800px;color:#262626"><span style="letter-spacing:-0.193px">Klienti - 0</span></div>
<div class="t" style="left:242px;top:614.800px;color:#262626"><span style="letter-spacing:-0.655px">Mapa</span></div>
<div class="t" style="left:329.200px;top:614.800px;color:#262626"><span style="letter-spacing:-0.618px">Přišel</span></div>
<div class="btn" style="left:62.4px;top:878px;width:60.0px;height:30.500px;border-radius:2px;background:linear-gradient(#f4f4f4,#e8e8e8)"></div>
<div class="btn" style="left:123.9px;top:878px;width:59.8px;height:30.500px;border-radius:2px;background:linear-gradient(#f4f4f4,#e8e8e8)"></div>
<div class="btn" style="left:184.7px;top:878px;width:60.3px;height:30.500px;border-radius:2px;background:linear-gradient(#f4f4f4,#e8e8e8)"></div>
<div class="btn" style="left:246px;top:878px;width:61.0px;height:30.500px;border-radius:2px;background:linear-gradient(#f4f4f4,#e8e8e8)"></div>
<svg class="a" style="left:85.5px;top:884px" width="14" height="19" viewBox="0 0 14 19"><path d="M3.4 10.500V5.200Q3.4 3.8 4.6 3.8 5.7 3.8 5.7 5.200V3Q5.7 1.4 7 1.4 8.2 1.4 8.2 3V2.200Q8.2 .6 9.5 .6 10.7 .6 10.7 2.200V3.400Q10.7 2 11.9 2 13.1 2 13.1 3.400V11C13.1 15 11.6 18.4 8 18.4 5 18.4 3.6 16.5 2.4 14.200L.8 11Q.3 9.6 1.4 9.2 2.4 8.9 3.4 10.500Z" fill="#fadcdc" stroke="#9c8cc8" stroke-width="1" stroke-linejoin="round"/><path d="M5.7 5V9.500M8.2 3V9.300M10.7 3.400V9.5" stroke="#9c8cc8" stroke-width=".9"/></svg>
<svg class="a" style="left:143.4px;top:882.5px" width="20.6" height="20.6" viewBox="0 0 20.6 20.6"><circle cx="10.3" cy="10.3" r="9.8" fill="#3b7cc0"/><circle cx="10.3" cy="5.988000000000001" r="1.568" fill="#fff"/><rect x="8.928" y="8.928" width="2.7440000000000007" height="7.056" rx=".6" fill="#fff"/></svg>
<svg class="a" style="left:206px;top:884px" width="18" height="18" viewBox="0 0 18 18"><path d="M1 17.500L7.6 10.4" stroke="#787878" stroke-width="1.3" stroke-linecap="round"/><path d="M10.6 .8L17 7.2 15.4 8.2 13.4 7.8 10.8 11.2 11 14 9.6 15 3 8.4 4.2 7.2 7 7.4 10.2 4.6 9.8 2.400Z" fill="#44b454" stroke="#2c8c3c" stroke-width=".9" stroke-linejoin="round"/><path d="M11.2 2.600L15 6.4" stroke="#8ce090" stroke-width="1.1"/></svg>
<svg class="a" style="left:264.5px;top:882px" width="22" height="22" viewBox="0 0 22 22"><g transform="rotate(-28 11 10)"><path d="M11 1.200C15.5 1.2 17 5 17 9.5 17 13 18.5 14.5 20 16H2C3.5 14.5 5 13 5 9.5 5 5 6.5 1.2 11 1.200Z" fill="#f6bc2c" stroke="#c88c10" stroke-width="1"/><path d="M8 4C7 6 7 9 6.8 11" stroke="#fff0b0" stroke-width="1.4" fill="none" stroke-linecap="round"/><circle cx="11" cy="17.8" r="2.2" fill="#e09c18" stroke="#b87c08" stroke-width=".8"/><path d="M2 16H20" stroke="#c88c10" stroke-width="1.6"/></g></svg>
<div class="a" style="left:399.2px;top:165.500px;width:397.8px;height:719.500px;background:#fff;border:1.500px solid #cdcdcd;border-left:none;border-top:2px solid #bdbdbd;overflow:hidden">
<div class="a hd" style="left:0;top:0;width:376.30000000000007px;height:32px;border-bottom:1px solid #bfbfbf;border-right:1px solid #c2c2c2;border-left:2px solid #bdbdbd"></div>
<div class="t" style="left:17px;top:9px;width:375.50000000000006px;text-align:center;color:#262626"><span style="letter-spacing:-0.269px">1. Malý sál</span></div>
<div class="a hd" style="left:0;top:32px;width:376.30000000000007px;height:34px;border-bottom:1.200px solid #b6b6b6;border-right:1px solid #c2c2c2;border-left:2px solid #bdbdbd"></div>
<div class="vsep" style="left:124.00000000000006px;top:32px;height:33px"></div>
<div class="vsep" style="left:174.00000000000006px;top:32px;height:33px"></div>
<div class="vsep" style="left:223.59999999999997px;top:32px;height:33px"></div>
<div class="t" style="left:29.6px;top:42.500px;color:#262626"><span style="letter-spacing:-0.191px">datum</span></div>
<svg class="a" style="left:102.8px;top:48.700px" width="10.500" height="5.200" viewBox="0 0 11 6"><path d="M0 6H11L5.500 0Z" fill="#585858"/></svg>
<div class="t" style="left:124.00000000000006px;top:42.500px;width:50.0px;text-align:center;color:#262626"><span style="letter-spacing:-0.68px">Čas</span></div>
<div class="t" style="left:174.00000000000006px;top:42.500px;width:49.59999999999991px;text-align:center;color:#262626"><span style="letter-spacing:-0.273px">Lidé</span></div>
<div class="t" style="left:223.59999999999997px;top:42.500px;width:185.9000000000001px;text-align:center;color:#262626"><span style="letter-spacing:-0.525px">Záznam</span></div>
<div class="a" style="left:0.500px;top:66px;width:375.00000000000006px;height:630.500px;overflow:hidden;border-bottom:1px solid #a8a8a8">
<div class="row rb" style="top:0.5px;height:34px"><div class="a grp" style="left:34px;top:-0.300px;width:343.50000000000006px;height:34.300px"></div>
<div class="t" style="left:34.400px;top:1px;color:#14e2ff"><span style="letter-spacing:0.053px">22.08.2024</span></div><div class="t" style="left:223.39999999999998px;top:1px;color:#14e2ff"><span style="letter-spacing:0.228px">Čtvrtek</span></div>
<svg class="a" style="left:7.199999999999999px;top:7px" width="20" height="20" viewBox="-10 -10 20 20"><circle r="7.7" fill="none" stroke="#2c3432" stroke-width="1.4"/><path d="M-2.9-2.9L2.6 2.6M3-1V3H-1" fill="none" stroke="#2c3432" stroke-width="1.4" stroke-linecap="round" stroke-linejoin="round"/></svg>
</div>
<div class="row rg" style="top:34.5px;height:60px">
<svg class="a" style="left:72.4px;top:20.0px" width="24" height="20" viewBox="0 0 24 20"><path d="M9 7L12 16M17 6L13 15" stroke="#c8d0c8" stroke-width=".8" opacity=".35"/><ellipse cx="12.6" cy="3.6" rx="1.9" ry="2.1" fill="#5c3c34"/><ellipse cx="12.2" cy="4.4" rx="1.1" ry="1.3" fill="#d89070"/><path d="M11 6H14.200L13.8 10.500H11.400Z" fill="#e8a484"/><rect x="10.9" y="6.2" width="3.4" height="1.7" fill="#ec4850"/><path d="M11 10.200H14.200Q15 14 14 16H11.200Q10.2 14 11 10.200Z" fill="#f4485c"/><path d="M12 16L12.4 19M13.4 16L13.2 19" stroke="#ecc0a8" stroke-width=".9"/></svg>
<div class="c" style="left:123.50000000000006px"><span style="letter-spacing:0.153px">07:00</span></div><div class="c" style="left:173.80000000000007px"><span style="letter-spacing:0.272px">0/0</span></div>
<div class="c" style="left:223.99999999999997px"><span style="letter-spacing:-0.207px">Barbie tanec</span><br><span style="letter-spacing:-0.24px">Zaměstnanec 1</span><br><span style="letter-spacing:-0.29px">Skupina: Children</span></div>
</div>
<div class="row rb" style="top:94.5px;height:60px">
<svg class="a" style="left:72.4px;top:20.0px" width="24" height="20" viewBox="0 0 24 20"><path d="M9 7L12 16M17 6L13 15" stroke="#c8d0c8" stroke-width=".8" opacity=".35"/><ellipse cx="12.6" cy="3.6" rx="1.9" ry="2.1" fill="#5c3c34"/><ellipse cx="12.2" cy="4.4" rx="1.1" ry="1.3" fill="#d89070"/><path d="M11 6H14.200L13.8 10.500H11.400Z" fill="#e8a484"/><rect x="10.9" y="6.2" width="3.4" height="1.7" fill="#ec4850"/><path d="M11 10.200H14.200Q15 14 14 16H11.200Q10.2 14 11 10.200Z" fill="#f4485c"/><path d="M12 16L12.4 19M13.4 16L13.2 19" stroke="#ecc0a8" stroke-width=".9"/></svg>
<div class="c" style="left:123.50000000000006px"><span style="letter-spacing:0.153px">08:00</span></div><div class="c" style="left:173.80000000000007px"><span style="letter-spacing:0.272px">0/0</span></div>
<div class="c" style="left:223.99999999999997px"><span style="letter-spacing:-0.207px">Barbie tanec</span><br><span style="letter-spacing:-0.24px">Zaměstnanec 1</span><br><span style="letter-spacing:-0.29px">Skupina: Children</span></div>
</div>
<div class="row rg hl" style="top:154.5px;height:60px">
<div class="a ry" style="left:123.50000000000006px;top:0;width:251.5px;height:60px"></div>
<svg class="a" style="left:72.4px;top:20.0px" width="24" height="20" viewBox="0 0 24 20"><path d="M9 7L12 16M17 6L13 15" stroke="#c8d0c8" stroke-width=".8" opacity=".35"/><ellipse cx="12.6" cy="3.6" rx="1.9" ry="2.1" fill="#5c3c34"/><ellipse cx="12.2" cy="4.4" rx="1.1" ry="1.3" fill="#d89070"/><path d="M11 6H14.200L13.8 10.500H11.400Z" fill="#e8a484"/><rect x="10.9" y="6.2" width="3.4" height="1.7" fill="#ec4850"/><path d="M11 10.200H14.200Q15 14 14 16H11.200Q10.2 14 11 10.200Z" fill="#f4485c"/><path d="M12 16L12.4 19M13.4 16L13.2 19" stroke="#ecc0a8" stroke-width=".9"/></svg>
<div class="c" style="left:123.50000000000006px"><span style="letter-spacing:0.153px">09:00</span></div><div class="c" style="left:173.80000000000007px"><span style="letter-spacing:0.272px">0/1</span></div>
<div class="c" style="left:223.99999999999997px"><span style="letter-spacing:-0.207px">Barbie tanec</span><br><span style="letter-spacing:-0.24px">Zaměstnanec 1</span><br><span style="letter-spacing:-0.29px">Skupina: Children</span></div>
</div>
<div class="row rb hl" style="top:214.5px;height:20px">
<div class="a ry" style="left:123.50000000000006px;top:0;width:251.5px;height:20px"></div>
<svg class="a" style="left:72.4px;top:0.0px" width="24" height="20" viewBox="0 0 24 20"><g transform="translate(0.2,0)"><circle cx="10.2" cy="4.5" r="1.7" fill="#b86c48"/><circle cx="13.8" cy="3.4" r="1.7" fill="#4c4038"/><path d="M14.5 2.800L16.8 3.4 17 6 15.5 6.500Z" fill="#c8c0b8"/><path d="M10.5 6L13 5.2 14 9 11.5 10Z" fill="#e8b498"/><path d="M14 5.500L16.4 6.2 16.6 17.500H15.200L14.8 12 13.2 9Z" fill="#303434"/><path d="M11.4 7.500L13.8 8.5 14.8 17.5 11 18 8.5 17 10.5 12Z" fill="#e8242c"/><path d="M10 14L4.5 17.6" stroke="#e8a890" stroke-width="1.3"/><path d="M3 17.800H6M8 17.800H10.500M15 17.800H17.2" stroke="#282828" stroke-width="1.2"/></g></svg>
<div class="c" style="left:123.50000000000006px"><span style="letter-spacing:0.153px">10:00</span></div><div class="c" style="left:173.80000000000007px"><span style="letter-spacing:0.272px">0/1</span></div>
<div class="c" style="left:223.99999999999997px"><span style="letter-spacing:-0.2px">Současný tanec</span></div>
</div>
<div class="row rg" style="top:234.5px;height:20px">
<svg class="a" style="left:72.4px;top:0.0px" width="24" height="20" viewBox="0 0 24 20"><g transform="translate(0.2,0)"><circle cx="10.2" cy="4.5" r="1.7" fill="#b86c48"/><circle cx="13.8" cy="3.4" r="1.7" fill="#4c4038"/><path d="M14.5 2.800L16.8 3.4 17 6 15.5 6.500Z" fill="#c8c0b8"/><path d="M10.5 6L13 5.2 14 9 11.5 10Z" fill="#e8b498"/><path d="M14 5.500L16.4 6.2 16.6 17.500H15.200L14.8 12 13.2 9Z" fill="#303434"/><path d="M11.4 7.500L13.8 8.5 14.8 17.5 11 18 8.5 17 10.5 12Z" fill="#e8242c"/><path d="M10 14L4.5 17.6" stroke="#e8a890" stroke-width="1.3"/><path d="M3 17.800H6M8 17.800H10.500M15 17.800H17.2" stroke="#282828" stroke-width="1.2"/></g></svg>
<div class="c" style="left:123.50000000000006px"><span style="letter-spacing:0.358px">11:00</span></div><div class="c" style="left:173.80000000000007px"><span style="letter-spacing:0.272px">0/0</span></div>
<div class="c" style="left:223.99999999999997px"><span style="letter-spacing:-0.2px">Současný tanec</span></div>
</div>
<div class="row rb" style="top:254.5px;height:20px">
<svg class="a" style="left:72.4px;top:0.0px" width="24" height="20" viewBox="0 0 24 20"><g transform="translate(0.2,0)"><circle cx="10.2" cy="4.5" r="1.7" fill="#b86c48"/><circle cx="13.8" cy="3.4" r="1.7" fill="#4c4038"/><path d="M14.5 2.800L16.8 3.4 17 6 15.5 6.500Z" fill="#c8c0b8"/><path d="M10.5 6L13 5.2 14 9 11.5 10Z" fill="#e8b498"/><path d="M14 5.500L16.4 6.2 16.6 17.500H15.200L14.8 12 13.2 9Z" fill="#303434"/><path d="M11.4 7.500L13.8 8.5 14.8 17.5 11 18 8.5 17 10.5 12Z" fill="#e8242c"/><path d="M10 14L4.5 17.6" stroke="#e8a890" stroke-width="1.3"/><path d="M3 17.800H6M8 17.800H10.500M15 17.800H17.2" stroke="#282828" stroke-width="1.2"/></g></svg>
<div class="c" style="left:123.50000000000006px"><span style="letter-spacing:-0.067px">12:00</span></div><div class="c" style="left:173.80000000000007px"><span style="letter-spacing:0.272px">0/0</span></div>
<div class="c" style="left:223.99999999999997px"><span style="letter-spacing:-0.2px">Současný tanec</span></div>
</div>
<div class="row rg" style="top:274.5px;height:20px">
<svg class="a" style="left:72.4px;top:0.0px" width="24" height="20" viewBox="0 0 24 20"><g transform="translate(0.2,0)"><circle cx="10.2" cy="4.5" r="1.7" fill="#b86c48"/><circle cx="13.8" cy="3.4" r="1.7" fill="#4c4038"/><path d="M14.5 2.800L16.8 3.4 17 6 15.5 6.500Z" fill="#c8c0b8"/><path d="M10.5 6L13 5.2 14 9 11.5 10Z" fill="#e8b498"/><path d="M14 5.500L16.4 6.2 16.6 17.500H15.200L14.8 12 13.2 9Z" fill="#303434"/><path d="M11.4 7.500L13.8 8.5 14.8 17.5 11 18 8.5 17 10.5 12Z" fill="#e8242c"/><path d="M10 14L4.5 17.6" stroke="#e8a890" stroke-width="1.3"/><path d="M3 17.800H6M8 17.800H10.500M15 17.800H17.2" stroke="#282828" stroke-width="1.2"/></g></svg>
<div class="c" style="left:123.50000000000006px"><span style="letter-spacing:0.153px">13:00</span></div><div class="c" style="left:173.80000000000007px"><span style="letter-spacing:0.272px">0/0</span></div>
<div class="c" style="left:223.99999999999997px"><span style="letter-spacing:-0.2px">Současný tanec</span></div>
</div>
<div class="row rb" style="top:294.5px;height:20px">
<svg class="a" style="left:72.4px;top:0.0px" width="24" height="20" viewBox="0 0 24 20"><g transform="translate(0.2,0)"><circle cx="10.2" cy="4.5" r="1.7" fill="#b86c48"/><circle cx="13.8" cy="3.4" r="1.7" fill="#4c4038"/><path d="M14.5 2.800L16.8 3.4 17 6 15.5 6.500Z" fill="#c8c0b8"/><path d="M10.5 6L13 5.2 14 9 11.5 10Z" fill="#e8b498"/><path d="M14 5.500L16.4 6.2 16.6 17.500H15.200L14.8 12 13.2 9Z" fill="#303434"/><path d="M11.4 7.500L13.8 8.5 14.8 17.5 11 18 8.5 17 10.5 12Z" fill="#e8242c"/><path d="M10 14L4.5 17.6" stroke="#e8a890" stroke-width="1.3"/><path d="M3 17.800H6M8 17.800H10.500M15 17.800H17.2" stroke="#282828" stroke-width="1.2"/></g></svg>
<div class="c" style="left:123.50000000000006px"><span style="letter-spacing:0.153px">14:00</span></div><div class="c" style="left:173.80000000000007px"><span style="letter-spacing:0.272px">0/0</span></div>
<div class="c" style="left:223.99999999999997px"><span style="letter-spacing:-0.2px">Současný tanec</span></div>
</div>
<div class="row rg" style="top:314.5px;height:40px">
<svg class="a" style="left:72.4px;top:10.0px" width="24" height="20" viewBox="0 0 24 20"><g transform="translate(-0.5,-0.8)"><ellipse cx="7.8" cy="4.6" rx="1.6" ry="1.9" fill="#70383c"/><path d="M7 6.500L9.5 6.2 11 12 8.5 12.500Z" fill="#904448"/><path d="M8.5 12L11 11.5 11.2 18 9 18.500Z" fill="#747878"/><path d="M8.5 19H11.5" stroke="#585c5c" stroke-width="1.5"/><path d="M7.2 8L6.2 14" stroke="#70a080" stroke-width="1.2"/><circle cx="13.8" cy="4.3" r="1.6" fill="#e8ac3c"/><circle cx="13.3" cy="3" r=".8" fill="#2c9c70"/><path d="M10.5 6L13 7.5" stroke="#f0c8a8" stroke-width="1"/><path d="M13 6L15 6.2 19 11.8 12 11.8Z" fill="#1ca04c"/></g></svg>
<div class="c" style="left:123.50000000000006px"><span style="letter-spacing:0.153px">15:00</span></div><div class="c" style="left:173.80000000000007px"><span style="letter-spacing:0.272px">0/0</span></div>
<div class="c" style="left:223.99999999999997px"><span style="letter-spacing:-0.126px">Poppingový tanec</span><br><span style="letter-spacing:-0.263px">Zaměstnanec 5</span></div>
</div>
<div class="row rb" style="top:354.5px;height:40px">
<svg class="a" style="left:72.4px;top:10.0px" width="24" height="20" viewBox="0 0 24 20"><g transform="translate(-0.5,-0.8)"><ellipse cx="7.8" cy="4.6" rx="1.6" ry="1.9" fill="#70383c"/><path d="M7 6.500L9.5 6.2 11 12 8.5 12.500Z" fill="#904448"/><path d="M8.5 12L11 11.5 11.2 18 9 18.500Z" fill="#747878"/><path d="M8.5 19H11.5" stroke="#585c5c" stroke-width="1.5"/><path d="M7.2 8L6.2 14" stroke="#70a080" stroke-width="1.2"/><circle cx="13.8" cy="4.3" r="1.6" fill="#e8ac3c"/><circle cx="13.3" cy="3" r=".8" fill="#2c9c70"/><path d="M10.5 6L13 7.5" stroke="#f0c8a8" stroke-width="1"/><path d="M13 6L15 6.2 19 11.8 12 11.8Z" fill="#1ca04c"/></g></svg>
<div class="c" style="left:123.50000000000006px"><span style="letter-spacing:0.153px">16:00</span></div><div class="c" style="left:173.80000000000007px"><span style="letter-spacing:0.272px">0/0</span></div>
<div class="c" style="left:223.99999999999997px"><span style="letter-spacing:-0.126px">Poppingový tanec</span><br><span style="letter-spacing:-0.263px">Zaměstnanec 5</span></div>
</div>
<div class="row rg" style="top:394.5px;height:40px">
<svg class="a" style="left:72.4px;top:10.0px" width="24" height="20" viewBox="0 0 24 20"><g transform="translate(-0.5,-0.8)"><ellipse cx="7.8" cy="4.6" rx="1.6" ry="1.9" fill="#70383c"/><path d="M7 6.500L9.5 6.2 11 12 8.5 12.500Z" fill="#904448"/><path d="M8.5 12L11 11.5 11.2 18 9 18.500Z" fill="#747878"/><path d="M8.5 19H11.5" stroke="#585c5c" stroke-width="1.5"/><path d="M7.2 8L6.2 14" stroke="#70a080" stroke-width="1.2"/><circle cx="13.8" cy="4.3" r="1.6" fill="#e8ac3c"/><circle cx="13.3" cy="3" r=".8" fill="#2c9c70"/><path d="M10.5 6L13 7.5" stroke="#f0c8a8" stroke-width="1"/><path d="M13 6L15 6.2 19 11.8 12 11.8Z" fill="#1ca04c"/></g></svg>
<div class="c" style="left:123.50000000000006px"><span style="letter-spacing:0.153px">17:00</span></div><div class="c" style="left:173.80000000000007px"><span style="letter-spacing:0.272px">0/0</span></div>
<div class="c" style="left:223.99999999999997px"><span style="letter-spacing:-0.126px">Poppingový tanec</span><br><span style="letter-spacing:-0.263px">Zaměstnanec 5</span></div>
</div>
<div class="row rb hl" style="top:434.5px;height:20px">
<div class="a ry" style="left:123.50000000000006px;top:0;width:251.5px;height:20px"></div>
<svg class="a" style="left:72.4px;top:0.0px" width="24" height="20" viewBox="0 0 24 20"><g transform="translate(1,0)"><circle cx="5.8" cy="3.6" r="1.8" fill="#f8b87c"/><path d="M3 6L8 5.5 10.8 1.2 11.8 1.8 8.6 7.5 8.2 11.500H3.600L1.8 10.500Z" fill="#34a884"/><path d="M4 11.200H8L9.2 18.500H7.400L6 13 4.6 18.500H2.800Z" fill="#2c4c6c"/><circle cx="16.4" cy="3.6" r="1.7" fill="#f4b47c"/><path d="M11.6 1L12.8 .8 14.8 5.500H18L20 .8 21.2 1.2 19.2 7 18.8 11.500H14.200L13.8 7Z" fill="#dc4c30"/><path d="M14.2 11.200H18.800L19.8 18.500H18L16.5 13 14.4 18.500H12.600Z" fill="#2c4c6c"/></g></svg>
<div class="c" style="left:123.50000000000006px"><span style="letter-spacing:0.153px">18:00</span></div><div class="c" style="left:173.80000000000007px"><span style="letter-spacing:0.272px">0/1</span></div>
<div class="c" style="left:223.99999999999997px"><span style="letter-spacing:-0.136px">Hip-hopové tance</span></div>
</div>
<div class="row rg" style="top:454.5px;height:20px">
<svg class="a" style="left:72.4px;top:0.0px" width="24" height="20" viewBox="0 0 24 20"><g transform="translate(1,0)"><circle cx="5.8" cy="3.6" r="1.8" fill="#f8b87c"/><path d="M3 6L8 5.5 10.8 1.2 11.8 1.8 8.6 7.5 8.2 11.500H3.600L1.8 10.500Z" fill="#34a884"/><path d="M4 11.200H8L9.2 18.500H7.400L6 13 4.6 18.500H2.800Z" fill="#2c4c6c"/><circle cx="16.4" cy="3.6" r="1.7" fill="#f4b47c"/><path d="M11.6 1L12.8 .8 14.8 5.500H18L20 .8 21.2 1.2 19.2 7 18.8 11.500H14.200L13.8 7Z" fill="#dc4c30"/><path d="M14.2 11.200H18.800L19.8 18.500H18L16.5 13 14.4 18.500H12.600Z" fill="#2c4c6c"/></g></svg>
<div class="c" style="left:123.50000000000006px"><span style="letter-spacing:0.153px">19:00</span></div><div class="c" style="left:173.80000000000007px"><span style="letter-spacing:0.272px">0/0</span></div>
<div class="c" style="left:223.99999999999997px"><span style="letter-spacing:-0.136px">Hip-hopové tance</span></div>
</div>
<div class="row rb" style="top:474.5px;height:20px">
<svg class="a" style="left:72.4px;top:0.0px" width="24" height="20" viewBox="0 0 24 20"><g transform="translate(1,0)"><circle cx="5.8" cy="3.6" r="1.8" fill="#f8b87c"/><path d="M3 6L8 5.5 10.8 1.2 11.8 1.8 8.6 7.5 8.2 11.500H3.600L1.8 10.500Z" fill="#34a884"/><path d="M4 11.200H8L9.2 18.500H7.400L6 13 4.6 18.500H2.800Z" fill="#2c4c6c"/><circle cx="16.4" cy="3.6" r="1.7" fill="#f4b47c"/><path d="M11.6 1L12.8 .8 14.8 5.500H18L20 .8 21.2 1.2 19.2 7 18.8 11.500H14.200L13.8 7Z" fill="#dc4c30"/><path d="M14.2 11.200H18.800L19.8 18.500H18L16.5 13 14.4 18.500H12.600Z" fill="#2c4c6c"/></g></svg>
<div class="c" style="left:123.50000000000006px"><span style="letter-spacing:0.153px">20:00</span></div><div class="c" style="left:173.80000000000007px"><span style="letter-spacing:0.272px">0/0</span></div>
<div class="c" style="left:223.99999999999997px"><span style="letter-spacing:-0.136px">Hip-hopové tance</span></div>
</div>
<div class="row rg" style="top:494.5px;height:34px"><div class="a grp" style="left:34px;top:-0.300px;width:343.50000000000006px;height:34.300px"></div>
<div class="t" style="left:34.400px;top:1px;color:#fff"><span style="letter-spacing:0.053px">23.08.2024</span></div><div class="t" style="left:223.39999999999998px;top:1px;color:#fff"><span style="letter-spacing:0.108px">pátek</span></div>
<svg class="a" style="left:7.199999999999999px;top:7px" width="20" height="20" viewBox="-10 -10 20 20"><circle r="7.7" fill="none" stroke="#2c3432" stroke-width="1.4"/><path d="M-2.9-2.9L2.6 2.6M3-1V3H-1" fill="none" stroke="#2c3432" stroke-width="1.4" stroke-linecap="round" stroke-linejoin="round"/></svg>
</div>
<div class="row rb" style="top:528.5px;height:60px">
<svg class="a" style="left:72.4px;top:20.0px" width="24" height="20" viewBox="0 0 24 20"><path d="M9 7L12 16M17 6L13 15" stroke="#c8d0c8" stroke-width=".8" opacity=".35"/><ellipse cx="12.6" cy="3.6" rx="1.9" ry="2.1" fill="#5c3c34"/><ellipse cx="12.2" cy="4.4" rx="1.1" ry="1.3" fill="#d89070"/><path d="M11 6H14.200L13.8 10.500H11.400Z" fill="#e8a484"/><rect x="10.9" y="6.2" width="3.4" height="1.7" fill="#ec4850"/><path d="M11 10.200H14.200Q15 14 14 16H11.200Q10.2 14 11 10.200Z" fill="#f4485c"/><path d="M12 16L12.4 19M13.4 16L13.2 19" stroke="#ecc0a8" stroke-width=".9"/></svg>
<div class="c" style="left:123.50000000000006px"><span style="letter-spacing:0.153px">07:00</span></div><div class="c" style="left:173.80000000000007px"><span style="letter-spacing:0.272px">0/0</span></div>
<div class="c" style="left:223.99999999999997px"><span style="letter-spacing:-0.207px">Barbie tanec</span><br><span style="letter-spacing:-0.24px">Zaměstnanec 1</span><br><span style="letter-spacing:-0.29px">Skupina: Children</span></div>
</div>
<div class="row rg" style="top:588.5px;height:60px">
<svg class="a" style="left:72.4px;top:20.0px" width="24" height="20" viewBox="0 0 24 20"><path d="M9 7L12 16M17 6L13 15" stroke="#c8d0c8" stroke-width=".8" opacity=".35"/><ellipse cx="12.6" cy="3.6" rx="1.9" ry="2.1" fill="#5c3c34"/><ellipse cx="12.2" cy="4.4" rx="1.1" ry="1.3" fill="#d89070"/><path d="M11 6H14.200L13.8 10.500H11.400Z" fill="#e8a484"/><rect x="10.9" y="6.2" width="3.4" height="1.7" fill="#ec4850"/><path d="M11 10.200H14.200Q15 14 14 16H11.200Q10.2 14 11 10.200Z" fill="#f4485c"/><path d="M12 16L12.4 19M13.4 16L13.2 19" stroke="#ecc0a8" stroke-width=".9"/></svg>
<div class="c" style="left:123.50000000000006px"><span style="letter-spacing:0.153px">08:00</span></div><div class="c" style="left:173.80000000000007px"><span style="letter-spacing:0.272px">0/0</span></div>
<div class="c" style="left:223.99999999999997px"><span style="letter-spacing:-0.207px">Barbie tanec</span><br><span style="letter-spacing:-0.24px">Zaměstnanec 1</span><br><span style="letter-spacing:-0.29px">Skupina: Children</span></div>
</div>
</div>
<div class="a" style="left:0;top:696.500px;width:1.300px;height:23px;background:#cdcdcd"></div>
<svg class="a" style="left:382.20000000000005px;top:7.500px" width="8" height="4"><path d="M0 4H8L4 0Z" fill="#8a8a8a"/></svg>
<svg class="a" style="left:382.20000000000005px;top:682.500px" width="8" height="4"><path d="M0 0H8L4 4Z" fill="#8a8a8a"/></svg>
<div class="a" style="left:381.30000000000007px;top:20.300px;width:10px;height:416px;background:#b9b9b9"></div>
<svg class="a" style="left:8.199999999999989px;top:702px" width="5" height="9"><path d="M5 0V9L0 4.500Z" fill="#7a7a7a"/></svg>
<svg class="a" style="left:360.8px;top:702px" width="5" height="9"><path d="M0 0V9L5 4.500Z" fill="#7a7a7a"/></svg>
<div class="a" style="left:21.69999999999999px;width:300.6px;top:702px;height:9.500px;background:#b9b9b9"></div>
</div>
<div class="a" style="left:804.2px;top:165.500px;width:397.5px;height:719.500px;background:#fff;border:1.500px solid #cdcdcd;border-left:none;border-top:2px solid #bdbdbd;overflow:hidden">
<div class="a hd" style="left:0;top:0;width:376.3px;height:32px;border-bottom:1px solid #bfbfbf;border-right:1px solid #c2c2c2;border-left:2px solid #bdbdbd"></div>
<div class="t" style="left:17px;top:9px;width:375.5px;text-align:center;color:#262626"><span style="letter-spacing:-0.292px">2. Velký sál</span></div>
<div class="a hd" style="left:0;top:32px;width:376.3px;height:34px;border-bottom:1.200px solid #b6b6b6;border-right:1px solid #c2c2c2;border-left:2px solid #bdbdbd"></div>
<div class="vsep" style="left:124.59999999999991px;top:32px;height:33px"></div>
<div class="vsep" style="left:174.39999999999998px;top:32px;height:33px"></div>
<div class="vsep" style="left:224.20000000000005px;top:32px;height:33px"></div>
<div class="t" style="left:29.6px;top:42.500px;color:#262626"><span style="letter-spacing:-0.191px">datum</span></div>
<svg class="a" style="left:102.8px;top:48.700px" width="10.500" height="5.200" viewBox="0 0 11 6"><path d="M0 6H11L5.500 0Z" fill="#585858"/></svg>
<div class="t" style="left:124.59999999999991px;top:42.500px;width:49.80000000000007px;text-align:center;color:#262626"><span style="letter-spacing:-0.68px">Čas</span></div>
<div class="t" style="left:174.39999999999998px;top:42.500px;width:49.80000000000007px;text-align:center;color:#262626"><span style="letter-spacing:-0.273px">Lidé</span></div>
<div class="t" style="left:224.20000000000005px;top:42.500px;width:185.29999999999995px;text-align:center;color:#262626"><span style="letter-spacing:-0.525px">Záznam</span></div>
<div class="a" style="left:0.500px;top:66px;width:375.0px;height:630.500px;overflow:hidden;border-bottom:1px solid #a8a8a8">
<div class="row rb" style="top:0.5px;height:34px"><div class="a grp" style="left:34px;top:-0.300px;width:343.5px;height:34.300px"></div>
<div class="t" style="left:34.400px;top:1px;color:#14e2ff"><span style="letter-spacing:0.053px">22.08.2024</span></div><div class="t" style="left:224.00000000000006px;top:1px;color:#14e2ff"><span style="letter-spacing:0.228px">Čtvrtek</span></div>
<svg class="a" style="left:7.199999999999999px;top:7px" width="20" height="20" viewBox="-10 -10 20 20"><circle r="7.7" fill="none" stroke="#2c3432" stroke-width="1.4"/><path d="M-2.9-2.9L2.6 2.6M3-1V3H-1" fill="none" stroke="#2c3432" stroke-width="1.4" stroke-linecap="round" stroke-linejoin="round"/></svg>
</div>
<div class="row rg" style="top:34.5px;height:20px">
<svg class="a" style="left:72.4px;top:0.0px" width="24" height="20" viewBox="0 0 24 20"><circle cx="11.2" cy="4.6" r="1.7" fill="#8c4820"/><circle cx="14.2" cy="3" r="1.6" fill="#b8784c"/><path d="M12 5.500L14 6.5 13 9 11.5 8Z" fill="#e8b494"/><path d="M15 5.200L20 4.2" stroke="#d8c0a0" stroke-width="1.1"/><path d="M14.8 5L16.6 5.6 17.2 17H15.600L14.2 9Z" fill="#3c2c2c"/><path d="M13.2 7.500L15.4 8.8 16.8 17.200H3.200Q10 14 13.2 7.500Z" fill="#2498d8"/><path d="M15.4 17.600H18.4" stroke="#383030" stroke-width="1.2"/></svg>
<div class="c" style="left:124.09999999999991px"><span style="letter-spacing:0.153px">08:00</span></div><div class="c" style="left:174.2px"><span style="letter-spacing:0.272px">0/0</span></div>
<div class="c" style="left:224.60000000000005px"><span style="letter-spacing:-0.217px">Krumpův tanec</span></div>
</div>
<div class="row rb" style="top:54.5px;height:20px">
<svg class="a" style="left:72.4px;top:0.0px" width="24" height="20" viewBox="0 0 24 20"><circle cx="11.2" cy="4.6" r="1.7" fill="#8c4820"/><circle cx="14.2" cy="3" r="1.6" fill="#b8784c"/><path d="M12 5.500L14 6.5 13 9 11.5 8Z" fill="#e8b494"/><path d="M15 5.200L20 4.2" stroke="#d8c0a0" stroke-width="1.1"/><path d="M14.8 5L16.6 5.6 17.2 17H15.600L14.2 9Z" fill="#3c2c2c"/><path d="M13.2 7.500L15.4 8.8 16.8 17.200H3.200Q10 14 13.2 7.500Z" fill="#2498d8"/><path d="M15.4 17.600H18.4" stroke="#383030" stroke-width="1.2"/></svg>
<div class="c" style="left:124.09999999999991px"><span style="letter-spacing:0.153px">09:00</span></div><div class="c" style="left:174.2px"><span style="letter-spacing:0.272px">0/0</span></div>
<div class="c" style="left:224.60000000000005px"><span style="letter-spacing:-0.217px">Krumpův tanec</span></div>
</div>
<div class="row rg hl" style="top:74.5px;height:20px">
<div class="a ry" style="left:124.09999999999991px;top:0;width:250.9000000000001px;height:20px"></div>
<svg class="a" style="left:72.4px;top:0.0px" width="24" height="20" viewBox="0 0 24 20"><circle cx="11.2" cy="4.6" r="1.7" fill="#8c4820"/><circle cx="14.2" cy="3" r="1.6" fill="#b8784c"/><path d="M12 5.500L14 6.5 13 9 11.5 8Z" fill="#e8b494"/><path d="M15 5.200L20 4.2" stroke="#d8c0a0" stroke-width="1.1"/><path d="M14.8 5L16.6 5.6 17.2 17H15.600L14.2 9Z" fill="#3c2c2c"/><path d="M13.2 7.500L15.4 8.8 16.8 17.200H3.200Q10 14 13.2 7.500Z" fill="#2498d8"/><path d="M15.4 17.600H18.4" stroke="#383030" stroke-width="1.2"/></svg>
<div class="c" style="left:124.09999999999991px"><span style="letter-spacing:0.153px">10:00</span></div><div class="c" style="left:174.2px"><span style="letter-spacing:0.272px">0/2</span></div>
<div class="c" style="left:224.60000000000005px"><span style="letter-spacing:-0.217px">Krumpův tanec</span></div>
</div>
<div class="row rb" style="top:94.5px;height:20px">
<svg class="a" style="left:72.4px;top:0.0px" width="24" height="20" viewBox="0 0 24 20"><circle cx="11.2" cy="4.6" r="1.7" fill="#8c4820"/><circle cx="14.2" cy="3" r="1.6" fill="#b8784c"/><path d="M12 5.500L14 6.5 13 9 11.5 8Z" fill="#e8b494"/><path d="M15 5.200L20 4.2" stroke="#d8c0a0" stroke-width="1.1"/><path d="M14.8 5L16.6 5.6 17.2 17H15.600L14.2 9Z" fill="#3c2c2c"/><path d="M13.2 7.500L15.4 8.8 16.8 17.200H3.200Q10 14 13.2 7.500Z" fill="#2498d8"/><path d="M15.4 17.600H18.4" stroke="#383030" stroke-width="1.2"/></svg>
<div class="c" style="left:124.09999999999991px"><span style="letter-spacing:0.358px">11:00</span></div><div class="c" style="left:174.2px"><span style="letter-spacing:0.272px">0/0</span></div>
<div class="c" style="left:224.60000000000005px"><span style="letter-spacing:-0.217px">Krumpův tanec</span></div>
</div>
<div class="row rg" style="top:114.5px;height:20px">
<svg class="a" style="left:72.4px;top:0.0px" width="24" height="20" viewBox="0 0 24 20"><circle cx="11.2" cy="4.6" r="1.7" fill="#8c4820"/><circle cx="14.2" cy="3" r="1.6" fill="#b8784c"/><path d="M12 5.500L14 6.5 13 9 11.5 8Z" fill="#e8b494"/><path d="M15 5.200L20 4.2" stroke="#d8c0a0" stroke-width="1.1"/><path d="M14.8 5L16.6 5.6 17.2 17H15.600L14.2 9Z" fill="#3c2c2c"/><path d="M13.2 7.500L15.4 8.8 16.8 17.200H3.200Q10 14 13.2 7.500Z" fill="#2498d8"/><path d="M15.4 17.600H18.4" stroke="#383030" stroke-width="1.2"/></svg>
<div class="c" style="left:124.09999999999991px"><span style="letter-spacing:-0.067px">12:00</span></div><div class="c" style="left:174.2px"><span style="letter-spacing:0.272px">0/0</span></div>
<div class="c" style="left:224.60000000000005px"><span style="letter-spacing:-0.217px">Krumpův tanec</span></div>
</div>
<div class="row rb" style="top:134.5px;height:60px">
<svg class="a" style="left:72.4px;top:20.0px" width="24" height="20" viewBox="0 0 24 20"><ellipse cx="9" cy="3.2" rx="2.2" ry="1.6" fill="#e0202c" transform="rotate(-20 9 3.200)"/><path d="M9 4.500L10.5 8" stroke="#f0d0c8" stroke-width=".8"/><path d="M12.2 5.200Q13.8 6 13.4 10.500L12 10Z" fill="#281c1c"/><circle cx="12" cy="5.6" r="1.2" fill="#e8a0a0"/><path d="M11 7.500L12.6 8 12.8 12 10.2 12.500Z" fill="#dc2830"/><path d="M10 11.500Q14 12 18.4 16L17 17.5 6.8 18.800Q6 14 10 11.500Z" fill="#d8181c"/><path d="M7 15.500Q12 15 17 16" stroke="#b01014" stroke-width=".6" fill="none"/></svg>
<div class="c" style="left:124.09999999999991px"><span style="letter-spacing:0.153px">13:00</span></div><div class="c" style="left:174.2px"><span style="letter-spacing:0.272px">0/0</span></div>
<div class="c" style="left:224.60000000000005px"><span style="letter-spacing:-0.511px">House Dance</span><br><span style="letter-spacing:-0.286px">Zaměstnanec 2</span><br><span style="letter-spacing:-0.29px">Skupina: Children</span></div>
</div>
<div class="row rg" style="top:194.5px;height:60px">
<svg class="a" style="left:72.4px;top:20.0px" width="24" height="20" viewBox="0 0 24 20"><ellipse cx="9" cy="3.2" rx="2.2" ry="1.6" fill="#e0202c" transform="rotate(-20 9 3.200)"/><path d="M9 4.500L10.5 8" stroke="#f0d0c8" stroke-width=".8"/><path d="M12.2 5.200Q13.8 6 13.4 10.500L12 10Z" fill="#281c1c"/><circle cx="12" cy="5.6" r="1.2" fill="#e8a0a0"/><path d="M11 7.500L12.6 8 12.8 12 10.2 12.500Z" fill="#dc2830"/><path d="M10 11.500Q14 12 18.4 16L17 17.5 6.8 18.800Q6 14 10 11.500Z" fill="#d8181c"/><path d="M7 15.500Q12 15 17 16" stroke="#b01014" stroke-width=".6" fill="none"/></svg>
<div class="c" style="left:124.09999999999991px"><span style="letter-spacing:0.153px">14:00</span></div><div class="c" style="left:174.2px"><span style="letter-spacing:0.272px">0/0</span></div>
<div class="c" style="left:224.60000000000005px"><span style="letter-spacing:-0.511px">House Dance</span><br><span style="letter-spacing:-0.286px">Zaměstnanec 2</span><br><span style="letter-spacing:-0.29px">Skupina: Children</span></div>
</div>
<div class="row rb red" style="top:254.5px;height:60px">
<div class="a ry" style="left:124.09999999999991px;top:0;width:250.9000000000001px;height:60px"></div>
<svg class="a" style="left:72.4px;top:20.0px" width="24" height="20" viewBox="0 0 24 20"><ellipse cx="9" cy="3.2" rx="2.2" ry="1.6" fill="#e0202c" transform="rotate(-20 9 3.200)"/><path d="M9 4.500L10.5 8" stroke="#f0d0c8" stroke-width=".8"/><path d="M12.2 5.200Q13.8 6 13.4 10.500L12 10Z" fill="#281c1c"/><circle cx="12" cy="5.6" r="1.2" fill="#e8a0a0"/><path d="M11 7.500L12.6 8 12.8 12 10.2 12.500Z" fill="#dc2830"/><path d="M10 11.500Q14 12 18.4 16L17 17.5 6.8 18.800Q6 14 10 11.500Z" fill="#d8181c"/><path d="M7 15.500Q12 15 17 16" stroke="#b01014" stroke-width=".6" fill="none"/></svg>
<div class="c" style="left:124.09999999999991px"><span style="letter-spacing:0.153px">15:00</span></div><div class="c" style="left:174.2px"><span style="letter-spacing:0.272px">0/1</span></div>
<div class="c" style="left:224.60000000000005px"><span style="letter-spacing:-0.511px">House Dance</span><br><span style="letter-spacing:-0.286px">Zaměstnanec 2</span><br><span style="letter-spacing:-0.29px">Skupina: Children</span></div>
</div>
<div class="row rg" style="top:314.5px;height:60px">
<svg class="a" style="left:72.4px;top:20.0px" width="24" height="20" viewBox="0 0 24 20"><ellipse cx="9" cy="3.2" rx="2.2" ry="1.6" fill="#e0202c" transform="rotate(-20 9 3.200)"/><path d="M9 4.500L10.5 8" stroke="#f0d0c8" stroke-width=".8"/><path d="M12.2 5.200Q13.8 6 13.4 10.500L12 10Z" fill="#281c1c"/><circle cx="12" cy="5.6" r="1.2" fill="#e8a0a0"/><path d="M11 7.500L12.6 8 12.8 12 10.2 12.500Z" fill="#dc2830"/><path d="M10 11.500Q14 12 18.4 16L17 17.5 6.8 18.800Q6 14 10 11.500Z" fill="#d8181c"/><path d="M7 15.500Q12 15 17 16" stroke="#b01014" stroke-width=".6" fill="none"/></svg>
<div class="c" style="left:124.09999999999991px"><span style="letter-spacing:0.153px">16:00</span></div><div class="c" style="left:174.2px"><span style="letter-spacing:0.272px">0/0</span></div>
<div class="c" style="left:224.60000000000005px"><span style="letter-spacing:-0.511px">House Dance</span><br><span style="letter-spacing:-0.286px">Zaměstnanec 2</span><br><span style="letter-spacing:-0.29px">Skupina: Children</span></div>
</div>
<div class="row rb" style="top:374.5px;height:60px">
<svg class="a" style="left:72.4px;top:20.0px" width="24" height="20" viewBox="0 0 24 20"><ellipse cx="9" cy="3.2" rx="2.2" ry="1.6" fill="#e0202c" transform="rotate(-20 9 3.200)"/><path d="M9 4.500L10.5 8" stroke="#f0d0c8" stroke-width=".8"/><path d="M12.2 5.200Q13.8 6 13.4 10.500L12 10Z" fill="#281c1c"/><circle cx="12" cy="5.6" r="1.2" fill="#e8a0a0"/><path d="M11 7.500L12.6 8 12.8 12 10.2 12.500Z" fill="#dc2830"/><path d="M10 11.500Q14 12 18.4 16L17 17.5 6.8 18.800Q6 14 10 11.500Z" fill="#d8181c"/><path d="M7 15.500Q12 15 17 16" stroke="#b01014" stroke-width=".6" fill="none"/></svg>
<div class="c" style="left:124.09999999999991px"><span style="letter-spacing:0.153px">17:00</span></div><div class="c" style="left:174.2px"><span style="letter-spacing:0.272px">0/0</span></div>
<div class="c" style="left:224.60000000000005px"><span style="letter-spacing:-0.511px">House Dance</span><br><span style="letter-spacing:-0.286px">Zaměstnanec 2</span><br><span style="letter-spacing:-0.29px">Skupina: Children</span></div>
</div>
<div class="row rg hl" style="top:434.5px;height:20px">
<div class="a ry" style="left:124.09999999999991px;top:0;width:250.9000000000001px;height:20px"></div>
<svg class="a" style="left:72.4px;top:0.0px" width="24" height="20" viewBox="0 0 24 20"><rect x="9.9" y=".6" width="4.2" height="4.6" rx="1.6" fill="#ec5040"/><rect x="11" y="4.4" width="2" height="2.6" fill="#f8c030"/><path d="M10 7.500L3.6 3.400M14 7.500L20.4 3.4" stroke="#64b440" stroke-width="2"/><circle cx="2.8" cy="2.8" r="1.3" fill="#f4b070"/><circle cx="21.2" cy="2.8" r="1.3" fill="#f0bc50"/><path d="M9.4 7H14.600L15.8 13H8.200Z" fill="#f04c9c"/><path d="M11.2 7.500H13L13.4 13H10.800Z" fill="#68bc40"/><path d="M7.6 12.800H16.400Q17.6 16 17.2 19.400H6.800Q6.4 16 7.6 12.800Z" fill="#c48c44"/><path d="M7.4 14V19" stroke="#f4b030" stroke-width="1.2"/></svg>
<div class="c" style="left:124.09999999999991px"><span style="letter-spacing:0.153px">18:00</span></div><div class="c" style="left:174.2px"><span style="letter-spacing:0.272px">0/1</span></div>
<div class="c" style="left:224.60000000000005px"><span style="letter-spacing:-0.241px">Waacking tanec</span></div>
</div>
<div class="row rb" style="top:454.5px;height:20px">
<svg class="a" style="left:72.4px;top:0.0px" width="24" height="20" viewBox="0 0 24 20"><rect x="9.9" y=".6" width="4.2" height="4.6" rx="1.6" fill="#ec5040"/><rect x="11" y="4.4" width="2" height="2.6" fill="#f8c030"/><path d="M10 7.500L3.6 3.400M14 7.500L20.4 3.4" stroke="#64b440" stroke-width="2"/><circle cx="2.8" cy="2.8" r="1.3" fill="#f4b070"/><circle cx="21.2" cy="2.8" r="1.3" fill="#f0bc50"/><path d="M9.4 7H14.600L15.8 13H8.200Z" fill="#f04c9c"/><path d="M11.2 7.500H13L13.4 13H10.800Z" fill="#68bc40"/><path d="M7.6 12.800H16.400Q17.6 16 17.2 19.400H6.800Q6.4 16 7.6 12.800Z" fill="#c48c44"/><path d="M7.4 14V19" stroke="#f4b030" stroke-width="1.2"/></svg>
<div class="c" style="left:124.09999999999991px"><span style="letter-spacing:0.153px">19:00</span></div><div class="c" style="left:174.2px"><span style="letter-spacing:0.272px">0/0</span></div>
<div class="c" style="left:224.60000000000005px"><span style="letter-spacing:-0.241px">Waacking tanec</span></div>
</div>
<div class="row rg" style="top:474.5px;height:20px">
<svg class="a" style="left:72.4px;top:0.0px" width="24" height="20" viewBox="0 0 24 20"><rect x="9.9" y=".6" width="4.2" height="4.6" rx="1.6" fill="#ec5040"/><rect x="11" y="4.4" width="2" height="2.6" fill="#f8c030"/><path d="M10 7.500L3.6 3.400M14 7.500L20.4 3.4" stroke="#64b440" stroke-width="2"/><circle cx="2.8" cy="2.8" r="1.3" fill="#f4b070"/><circle cx="21.2" cy="2.8" r="1.3" fill="#f0bc50"/><path d="M9.4 7H14.600L15.8 13H8.200Z" fill="#f04c9c"/><path d="M11.2 7.500H13L13.4 13H10.800Z" fill="#68bc40"/><path d="M7.6 12.800H16.400Q17.6 16 17.2 19.400H6.800Q6.4 16 7.6 12.800Z" fill="#c48c44"/><path d="M7.4 14V19" stroke="#f4b030" stroke-width="1.2"/></svg>
<div class="c" style="left:124.09999999999991px"><span style="letter-spacing:0.153px">20:00</span></div><div class="c" style="left:174.2px"><span style="letter-spacing:0.272px">0/0</span></div>
<div class="c" style="left:224.60000000000005px"><span style="letter-spacing:-0.241px">Waacking tanec</span></div>
</div>
<div class="row rb" style="top:494.5px;height:20px">
<svg class="a" style="left:72.4px;top:0.0px" width="24" height="20" viewBox="0 0 24 20"><rect x="9.9" y=".6" width="4.2" height="4.6" rx="1.6" fill="#ec5040"/><rect x="11" y="4.4" width="2" height="2.6" fill="#f8c030"/><path d="M10 7.500L3.6 3.400M14 7.500L20.4 3.4" stroke="#64b440" stroke-width="2"/><circle cx="2.8" cy="2.8" r="1.3" fill="#f4b070"/><circle cx="21.2" cy="2.8" r="1.3" fill="#f0bc50"/><path d="M9.4 7H14.600L15.8 13H8.200Z" fill="#f04c9c"/><path d="M11.2 7.500H13L13.4 13H10.800Z" fill="#68bc40"/><path d="M7.6 12.800H16.400Q17.6 16 17.2 19.400H6.800Q6.4 16 7.6 12.800Z" fill="#c48c44"/><path d="M7.4 14V19" stroke="#f4b030" stroke-width="1.2"/></svg>
<div class="c" style="left:124.09999999999991px"><span style="letter-spacing:0.153px">21:00</span></div><div class="c" style="left:174.2px"><span style="letter-spacing:0.272px">0/0</span></div>
<div class="c" style="left:224.60000000000005px"><span style="letter-spacing:-0.241px">Waacking tanec</span></div>
</div>
<div class="row rg" style="top:514.5px;height:20px">
<svg class="a" style="left:72.4px;top:0.0px" width="24" height="20" viewBox="0 0 24 20"><rect x="9.9" y=".6" width="4.2" height="4.6" rx="1.6" fill="#ec5040"/><rect x="11" y="4.4" width="2" height="2.6" fill="#f8c030"/><path d="M10 7.500L3.6 3.400M14 7.500L20.4 3.4" stroke="#64b440" stroke-width="2"/><circle cx="2.8" cy="2.8" r="1.3" fill="#f4b070"/><circle cx="21.2" cy="2.8" r="1.3" fill="#f0bc50"/><path d="M9.4 7H14.600L15.8 13H8.200Z" fill="#f04c9c"/><path d="M11.2 7.500H13L13.4 13H10.800Z" fill="#68bc40"/><path d="M7.6 12.800H16.400Q17.6 16 17.2 19.400H6.800Q6.4 16 7.6 12.800Z" fill="#c48c44"/><path d="M7.4 14V19" stroke="#f4b030" stroke-width="1.2"/></svg>
<div class="c" style="left:124.09999999999991px"><span style="letter-spacing:0.153px">22:00</span></div><div class="c" style="left:174.2px"><span style="letter-spacing:0.272px">0/0</span></div>
<div class="c" style="left:224.60000000000005px"><span style="letter-spacing:-0.241px">Waacking tanec</span></div>
</div>
<div class="row rb" style="top:534.5px;height:34px"><div class="a grp" style="left:34px;top:-0.300px;width:343.5px;height:34.300px"></div>
<div class="t" style="left:34.400px;top:1px;color:#fff"><span style="letter-spacing:0.053px">23.08.2024</span></div><div class="t" style="left:224.00000000000006px;top:1px;color:#fff"><span style="letter-spacing:0.108px">pátek</span></div>
<svg class="a" style="left:7.199999999999999px;top:7px" width="20" height="20" viewBox="-10 -10 20 20"><circle r="7.7" fill="none" stroke="#2c3432" stroke-width="1.4"/><path d="M-2.9-2.9L2.6 2.6M3-1V3H-1" fill="none" stroke="#2c3432" stroke-width="1.4" stroke-linecap="round" stroke-linejoin="round"/></svg>
</div>
<div class="row rg" style="top:568.5px;height:20px">
<svg class="a" style="left:72.4px;top:0.0px" width="24" height="20" viewBox="0 0 24 20"><circle cx="11.2" cy="4.6" r="1.7" fill="#8c4820"/><circle cx="14.2" cy="3" r="1.6" fill="#b8784c"/><path d="M12 5.500L14 6.5 13 9 11.5 8Z" fill="#e8b494"/><path d="M15 5.200L20 4.2" stroke="#d8c0a0" stroke-width="1.1"/><path d="M14.8 5L16.6 5.6 17.2 17H15.600L14.2 9Z" fill="#3c2c2c"/><path d="M13.2 7.500L15.4 8.8 16.8 17.200H3.200Q10 14 13.2 7.500Z" fill="#2498d8"/><path d="M15.4 17.600H18.4" stroke="#383030" stroke-width="1.2"/></svg>
<div class="c" style="left:124.09999999999991px"><span style="letter-spacing:0.153px">08:00</span></div><div class="c" style="left:174.2px"><span style="letter-spacing:0.272px">0/0</span></div>
<div class="c" style="left:224.60000000000005px"><span style="letter-spacing:-0.217px">Krumpův tanec</span></div>
</div>
<div class="row rb" style="top:588.5px;height:20px">
<svg class="a" style="left:72.4px;top:0.0px" width="24" height="20" viewBox="0 0 24 20"><circle cx="11.2" cy="4.6" r="1.7" fill="#8c4820"/><circle cx="14.2" cy="3" r="1.6" fill="#b8784c"/><path d="M12 5.500L14 6.5 13 9 11.5 8Z" fill="#e8b494"/><path d="M15 5.200L20 4.2" stroke="#d8c0a0" stroke-width="1.1"/><path d="M14.8 5L16.6 5.6 17.2 17H15.600L14.2 9Z" fill="#3c2c2c"/><path d="M13.2 7.500L15.4 8.8 16.8 17.200H3.200Q10 14 13.2 7.500Z" fill="#2498d8"/><path d="M15.4 17.600H18.4" stroke="#383030" stroke-width="1.2"/></svg>
<div class="c" style="left:124.09999999999991px"><span style="letter-spacing:0.153px">09:00</span></div><div class="c" style="left:174.2px"><span style="letter-spacing:0.272px">0/0</span></div>
<div class="c" style="left:224.60000000000005px"><span style="letter-spacing:-0.217px">Krumpův tanec</span></div>
</div>
<div class="row rg" style="top:608.5px;height:20px">
<svg class="a" style="left:72.4px;top:0.0px" width="24" height="20" viewBox="0 0 24 20"><circle cx="11.2" cy="4.6" r="1.7" fill="#8c4820"/><circle cx="14.2" cy="3" r="1.6" fill="#b8784c"/><path d="M12 5.500L14 6.5 13 9 11.5 8Z" fill="#e8b494"/><path d="M15 5.200L20 4.2" stroke="#d8c0a0" stroke-width="1.1"/><path d="M14.8 5L16.6 5.6 17.2 17H15.600L14.2 9Z" fill="#3c2c2c"/><path d="M13.2 7.500L15.4 8.8 16.8 17.200H3.200Q10 14 13.2 7.500Z" fill="#2498d8"/><path d="M15.4 17.600H18.4" stroke="#383030" stroke-width="1.2"/></svg>
<div class="c" style="left:124.09999999999991px"><span style="letter-spacing:0.153px">10:00</span></div><div class="c" style="left:174.2px"><span style="letter-spacing:0.272px">0/0</span></div>
<div class="c" style="left:224.60000000000005px"><span style="letter-spacing:-0.217px">Krumpův tanec</span></div>
</div>
</div>
<div class="a" style="left:0;top:696.500px;width:1.300px;height:23px;background:#cdcdcd"></div>
<svg class="a" style="left:382.2px;top:7.500px" width="8" height="4"><path d="M0 4H8L4 0Z" fill="#8a8a8a"/></svg>
<svg class="a" style="left:382.2px;top:682.500px" width="8" height="4"><path d="M0 0H8L4 4Z" fill="#8a8a8a"/></svg>
<div class="a" style="left:381.3px;top:20.300px;width:10px;height:385px;background:#b9b9b9"></div>
<svg class="a" style="left:8.199999999999932px;top:702px" width="5" height="9"><path d="M5 0V9L0 4.500Z" fill="#7a7a7a"/></svg>
<svg class="a" style="left:360.79999999999995px;top:702px" width="5" height="9"><path d="M0 0V9L5 4.500Z" fill="#7a7a7a"/></svg>
<div class="a" style="left:21.699999999999932px;width:301.6px;top:702px;height:9.500px;background:#b9b9b9"></div>
</div>
<div class="a" style="left:22px;top:915.400px;width:1189.800px;height:4.800px;border:1.200px solid #c9c9c9;border-left:none;background:#fff"></div>
<div class="a" style="left:22px;top:915.400px;width:176px;height:56.300px;background:#fff;border:1.200px solid #c6c6c6;border-bottom:3.400px solid #1c9bf0"></div>
<svg class="a" style="left:40px;top:932px" width="30" height="26" viewBox="0 0 30 26"><rect x=".6" y=".6" width="28.8" height="24.8" rx="1.8" fill="#eef2fc" stroke="#6c7cc4" stroke-width="1.2"/><path d="M1.2 2.400Q1.2 1.2 2.4 1.200H27.600Q28.8 1.2 28.8 2.400V7H1.200Z" fill="url(#gwin)"/><rect x="24.4" y="2.6" width="2.4" height="2.2" fill="#e84838"/><path d="M1.2 7.400H28.8" stroke="#b4c4ec" stroke-width=".8"/></svg>
<div class="t" style="left:81.800px;top:936.500px;color:#2191e0"><span style="letter-spacing:-0.246px">Registrace</span></div>
<svg class="a" style="left:165px;top:939px" width="11" height="10" viewBox="0 0 11 10"><path d="M1.2 1L9.8 9M9.8 1L1.2 9" stroke="#2191e0" stroke-width="2.1"/></svg>
<div class="t" style="left:70.3px;top:978px;color:#333"><span style="letter-spacing:-0.027px">7.2.9059.10 Standard</span></div>
<div class="t" style="left:281.3px;top:978px;color:#333"><span style="letter-spacing:0.112px">localhost (utf8)</span></div>
<div class="t" style="left:453px;top:978px;color:#333"><span style="letter-spacing:-0.506px">NIKOLAY (MAIN)</span></div>
<div class="t" style="left:630.7px;top:978px;color:#333"><span style="letter-spacing:0.273px">22.08.2024</span></div>
<div class="t" style="left:761px;top:978px;color:#333"><span style="letter-spacing:0.369px">00:00:00:003</span></div>
<div class="t" style="left:890.5px;top:978px;color:#333"><span style="letter-spacing:-0.067px">12:00</span></div>
<div class="vsep" style="left:229px;top:976px;height:19px;background:#c6c6c6"></div>
<div class="vsep" style="left:399.5px;top:976px;height:19px;background:#c6c6c6"></div>
<div class="vsep" style="left:578px;top:976px;height:19px;background:#c6c6c6"></div>
<div class="vsep" style="left:727px;top:976px;height:19px;background:#c6c6c6"></div>
<div class="vsep" style="left:875px;top:976px;height:19px;background:#c6c6c6"></div>
<div class="vsep" style="left:1180.6px;top:976px;height:19px;background:#c6c6c6"></div>
<svg class="a" style="left:28.5px;top:974.8px" width="20.2" height="20.2" viewBox="0 0 20.2 20.2"><circle cx="10.1" cy="10.1" r="9.6" fill="#3b79bb"/><circle cx="10.1" cy="5.876" r="1.536" fill="#fff"/><rect x="8.756" y="8.756" width="2.688" height="6.912" rx=".6" fill="#fff"/></svg>
<svg class="a" style="left:243.5px;top:974.3px" width="16" height="19" viewBox="0 0 16 19"><path d="M.6 3.500V15.500C.6 17.3 4 18.5 8 18.500S15.4 17.3 15.4 15.500V3.500Z" fill="url(#gdb)" stroke="#c87818" stroke-width=".9"/><ellipse cx="8" cy="3.5" rx="7.4" ry="2.9" fill="#fdeec4" stroke="#c87818" stroke-width=".9"/><path d="M.6 7.500C.6 9.3 4 10.5 8 10.500S15.4 9.3 15.4 7.500M.6 11.500C.6 13.3 4 14.5 8 14.500S15.4 13.3 15.4 11.5" fill="none" stroke="#c87818" stroke-width=".9"/></svg>
<svg class="a" style="left:411.6px;top:975px" width="19.44" height="18.36" viewBox="0 0 18 17"><path d="M.6 15.500C.6 11 4 9.8 6 9.400L9 10.6 12 9.400C14 9.8 17.4 11 17.4 15.500Q9 17 .6 15.500Z" fill="url(#gbody)" stroke="#5c9030" stroke-width=".8"/><path d="M3.5999999999999996 7.29C2.25 -1.62 15.75 -1.62 14.4 7.29C13.86 10.260000000000002 12.78 10.8 12.24 8.64L5.76 8.64C5.220000000000001 10.8 4.14 10.260000000000002 3.5999999999999996 7.29Z" fill="url(#ghair)"/><path d="M5.112 4.59C7.38 2.7 10.620000000000001 2.16 12.888 4.59C13.32 10.260000000000002 10.620000000000001 11.61 9 11.61C7.38 11.61 4.68 10.260000000000002 5.112 4.59Z" fill="url(#gface)" stroke="#d09868" stroke-width=".5"/></svg>
<svg class="a" style="left:591.6px;top:975.7px" width="17.4" height="17.5" viewBox="0 0 17.4 17.5"><rect x=".5" y=".5" width="16.400" height="16.500" fill="#f4f6fd" stroke="#6470bc"/><rect x="1" y="1" width="15.400" height="4.200" fill="#dc5450"/><path d="M1 2.200H16.400" stroke="#f4a8a0" stroke-width=".8"/><text x="8.600" y="14.600" font-family="Liberation Sans,sans-serif" font-weight="bold" font-size="10.500" text-anchor="middle" fill="#2c3c90" letter-spacing="-.4">31</text></svg>
<svg class="a" style="left:1196px;top:980.800px" width="13" height="13"><g fill="#8e8e8e"><rect x="10.500" y="0" width="2.200" height="2.200"/><rect x="5.300" y="5.300" width="2.200" height="2.200"/><rect x="10.500" y="5.300" width="2.200" height="2.200"/><rect x="0.200" y="10.600" width="2.200" height="2.200"/><rect x="5.300" y="10.600" width="2.200" height="2.200"/><rect x="10.500" y="10.600" width="2.200" height="2.200"/></g></svg>
</body></html>
